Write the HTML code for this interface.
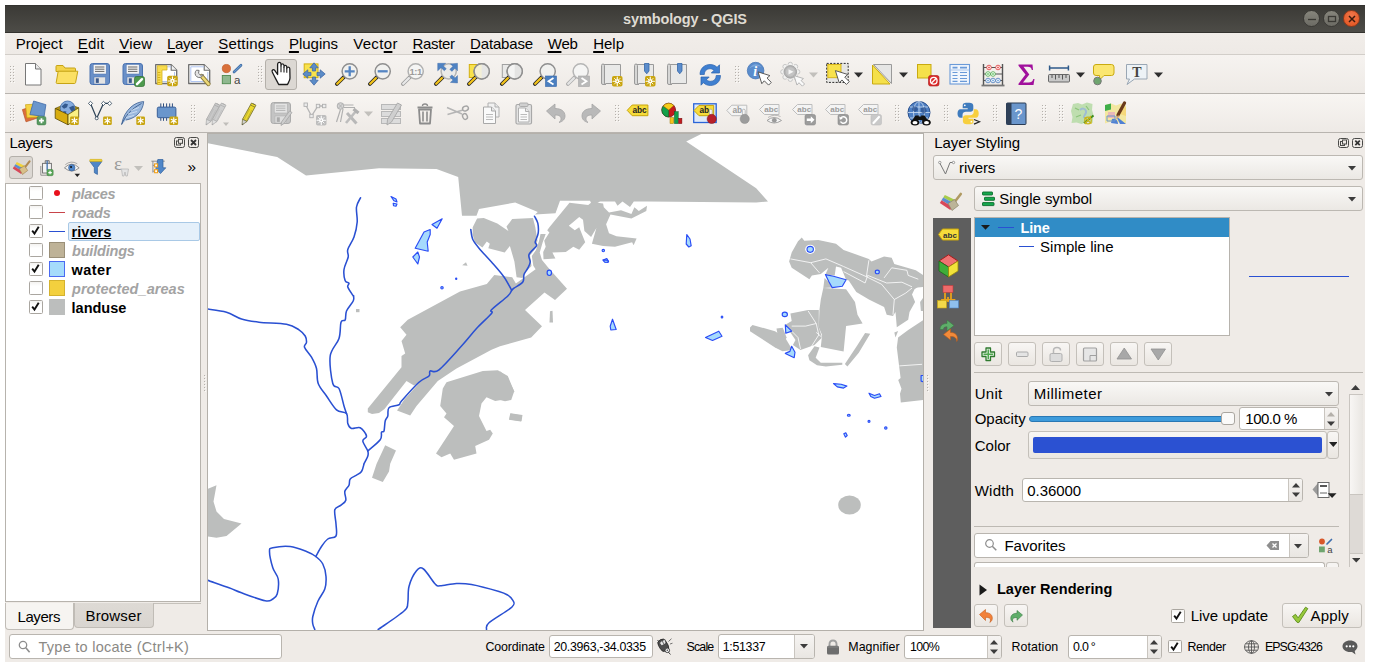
<!DOCTYPE html>
<html><head><meta charset="utf-8"><title>symbology - QGIS</title>
<style>
html,body{margin:0;padding:0;background:#fff;}
body{width:1374px;height:671px;overflow:hidden;position:relative;font-family:"Liberation Sans",sans-serif;color:#000;}
div,span,svg{position:absolute;box-sizing:border-box;}
.t{white-space:nowrap;line-height:20px;height:20px;}
u{text-decoration:underline;text-underline-offset:1.5px;text-decoration-thickness:1.5px;text-decoration-skip-ink:none;}
.btn{border:1px solid #c4c0ba;border-radius:3px;background:linear-gradient(#f8f6f4,#eae6e1);}
.inp{border:1px solid #b9b5af;border-radius:3px;background:#fff;}
.cmb{border:1px solid #bcb8b2;border-radius:3px;background:linear-gradient(#f9f8f6,#ebe8e4);}
.hd{width:5px;height:21px;background-image:radial-gradient(circle,#c6c2bd 0.7px,transparent 0.9px);background-size:3px 3px;}
.cb{border:1px solid #aaa6a0;border-radius:1.5px;background:linear-gradient(#f4f3f1,#fff 35%);}
</style></head>
<body>
<div style="left:5px;top:5px;width:1360px;height:657px;background:#efebe7;"></div>
<div style="left:5px;top:5px;width:1360px;height:28px;background:linear-gradient(#3b3a36,#4d4c47);border-top:1px solid #33322f;border-bottom:1px solid #34332f;"></div>
<span class="t" style="left:623px;top:9px;font-size:14.5px;letter-spacing:-0.11px;color:#dfdbd2;font-weight:bold;">symbology - QGIS</span>
<div style="left:1303px;top:10px;width:17px;height:17px;border-radius:50%;background:linear-gradient(#86857c,#6c6b64);border:1px solid #3a3935;"></div>
<div style="left:1323px;top:10px;width:17px;height:17px;border-radius:50%;background:linear-gradient(#86857c,#6c6b64);border:1px solid #3a3935;"></div>
<div style="left:1343px;top:10px;width:17px;height:17px;border-radius:50%;background:radial-gradient(circle at 50% 30%,#f0764a,#e2521d);border:1px solid #8f3a1c;"></div>
<svg style="left:1302.5px;top:9.5px" width="60" height="18" viewBox="1303 10 60 18"><g stroke="#3a3934" stroke-width="1.3" fill="none"><path d="M1308 19.5h8"/><rect x="1328.5" y="16.5" width="7" height="5"/><path d="M1349 16l6 6M1355 16l-6 6" stroke="#3b1a0c" stroke-width="1.5"/></g></svg>
<div style="left:5px;top:33px;width:1360px;height:21px;background:linear-gradient(#f1ede9,#eeeae6);"></div>
<span class="t" style="left:15.7px;top:34px;font-size:15px;letter-spacing:0.03px;">Pro<u>j</u>ect</span>
<span class="t" style="left:77.7px;top:34px;font-size:15px;letter-spacing:0.24px;"><u>E</u>dit</span>
<span class="t" style="left:119.2px;top:34px;font-size:15px;letter-spacing:0.21px;"><u>V</u>iew</span>
<span class="t" style="left:167px;top:34px;font-size:15px;letter-spacing:-0.33px;"><u>L</u>ayer</span>
<span class="t" style="left:218.3px;top:34px;font-size:15px;letter-spacing:0.17px;"><u>S</u>ettings</span>
<span class="t" style="left:288.9px;top:34px;font-size:15px;letter-spacing:-0.00px;"><u>P</u>lugins</span>
<span class="t" style="left:353.2px;top:34px;font-size:15px;letter-spacing:0.33px;">Vect<u>o</u>r</span>
<span class="t" style="left:412.5px;top:34px;font-size:15px;letter-spacing:-0.35px;"><u>R</u>aster</span>
<span class="t" style="left:470px;top:34px;font-size:15px;letter-spacing:-0.15px;"><u>D</u>atabase</span>
<span class="t" style="left:547.7px;top:34px;font-size:15px;letter-spacing:-0.16px;"><u>W</u>eb</span>
<span class="t" style="left:593.2px;top:34px;font-size:15px;letter-spacing:-0.02px;"><u>H</u>elp</span>
<div style="left:5px;top:54px;width:1360px;height:40px;background:linear-gradient(#f6f3f0,#eeeae6);border-top:1px solid #d2cec9;border-bottom:1px solid #b8b4af;"></div>
<div style="left:5px;top:94px;width:1360px;height:39px;background:linear-gradient(#f8f5f2,#eeeae6);border-bottom:1px solid #b8b4af;"></div>
<svg style="left:10px;top:66px" width="5" height="17" viewBox="0 0 5 17" shape-rendering="crispEdges"><rect x="0" y="0" width="1" height="1" fill="#b4b0ab"/><rect x="1" y="1" width="1" height="1" fill="#fbfaf8"/><rect x="0" y="3" width="1" height="1" fill="#b4b0ab"/><rect x="1" y="4" width="1" height="1" fill="#fbfaf8"/><rect x="0" y="6" width="1" height="1" fill="#b4b0ab"/><rect x="1" y="7" width="1" height="1" fill="#fbfaf8"/><rect x="0" y="9" width="1" height="1" fill="#b4b0ab"/><rect x="1" y="10" width="1" height="1" fill="#fbfaf8"/><rect x="0" y="12" width="1" height="1" fill="#b4b0ab"/><rect x="1" y="13" width="1" height="1" fill="#fbfaf8"/><rect x="0" y="15" width="1" height="1" fill="#b4b0ab"/><rect x="1" y="16" width="1" height="1" fill="#fbfaf8"/><rect x="3" y="0" width="1" height="1" fill="#b4b0ab"/><rect x="4" y="1" width="1" height="1" fill="#fbfaf8"/><rect x="3" y="3" width="1" height="1" fill="#b4b0ab"/><rect x="4" y="4" width="1" height="1" fill="#fbfaf8"/><rect x="3" y="6" width="1" height="1" fill="#b4b0ab"/><rect x="4" y="7" width="1" height="1" fill="#fbfaf8"/><rect x="3" y="9" width="1" height="1" fill="#b4b0ab"/><rect x="4" y="10" width="1" height="1" fill="#fbfaf8"/><rect x="3" y="12" width="1" height="1" fill="#b4b0ab"/><rect x="4" y="13" width="1" height="1" fill="#fbfaf8"/><rect x="3" y="15" width="1" height="1" fill="#b4b0ab"/><rect x="4" y="16" width="1" height="1" fill="#fbfaf8"/></svg>
<svg style="left:258px;top:66px" width="5" height="17" viewBox="0 0 5 17" shape-rendering="crispEdges"><rect x="0" y="0" width="1" height="1" fill="#b4b0ab"/><rect x="1" y="1" width="1" height="1" fill="#fbfaf8"/><rect x="0" y="3" width="1" height="1" fill="#b4b0ab"/><rect x="1" y="4" width="1" height="1" fill="#fbfaf8"/><rect x="0" y="6" width="1" height="1" fill="#b4b0ab"/><rect x="1" y="7" width="1" height="1" fill="#fbfaf8"/><rect x="0" y="9" width="1" height="1" fill="#b4b0ab"/><rect x="1" y="10" width="1" height="1" fill="#fbfaf8"/><rect x="0" y="12" width="1" height="1" fill="#b4b0ab"/><rect x="1" y="13" width="1" height="1" fill="#fbfaf8"/><rect x="0" y="15" width="1" height="1" fill="#b4b0ab"/><rect x="1" y="16" width="1" height="1" fill="#fbfaf8"/><rect x="3" y="0" width="1" height="1" fill="#b4b0ab"/><rect x="4" y="1" width="1" height="1" fill="#fbfaf8"/><rect x="3" y="3" width="1" height="1" fill="#b4b0ab"/><rect x="4" y="4" width="1" height="1" fill="#fbfaf8"/><rect x="3" y="6" width="1" height="1" fill="#b4b0ab"/><rect x="4" y="7" width="1" height="1" fill="#fbfaf8"/><rect x="3" y="9" width="1" height="1" fill="#b4b0ab"/><rect x="4" y="10" width="1" height="1" fill="#fbfaf8"/><rect x="3" y="12" width="1" height="1" fill="#b4b0ab"/><rect x="4" y="13" width="1" height="1" fill="#fbfaf8"/><rect x="3" y="15" width="1" height="1" fill="#b4b0ab"/><rect x="4" y="16" width="1" height="1" fill="#fbfaf8"/></svg>
<svg style="left:735px;top:66px" width="5" height="17" viewBox="0 0 5 17" shape-rendering="crispEdges"><rect x="0" y="0" width="1" height="1" fill="#b4b0ab"/><rect x="1" y="1" width="1" height="1" fill="#fbfaf8"/><rect x="0" y="3" width="1" height="1" fill="#b4b0ab"/><rect x="1" y="4" width="1" height="1" fill="#fbfaf8"/><rect x="0" y="6" width="1" height="1" fill="#b4b0ab"/><rect x="1" y="7" width="1" height="1" fill="#fbfaf8"/><rect x="0" y="9" width="1" height="1" fill="#b4b0ab"/><rect x="1" y="10" width="1" height="1" fill="#fbfaf8"/><rect x="0" y="12" width="1" height="1" fill="#b4b0ab"/><rect x="1" y="13" width="1" height="1" fill="#fbfaf8"/><rect x="0" y="15" width="1" height="1" fill="#b4b0ab"/><rect x="1" y="16" width="1" height="1" fill="#fbfaf8"/><rect x="3" y="0" width="1" height="1" fill="#b4b0ab"/><rect x="4" y="1" width="1" height="1" fill="#fbfaf8"/><rect x="3" y="3" width="1" height="1" fill="#b4b0ab"/><rect x="4" y="4" width="1" height="1" fill="#fbfaf8"/><rect x="3" y="6" width="1" height="1" fill="#b4b0ab"/><rect x="4" y="7" width="1" height="1" fill="#fbfaf8"/><rect x="3" y="9" width="1" height="1" fill="#b4b0ab"/><rect x="4" y="10" width="1" height="1" fill="#fbfaf8"/><rect x="3" y="12" width="1" height="1" fill="#b4b0ab"/><rect x="4" y="13" width="1" height="1" fill="#fbfaf8"/><rect x="3" y="15" width="1" height="1" fill="#b4b0ab"/><rect x="4" y="16" width="1" height="1" fill="#fbfaf8"/></svg>
<svg style="left:10px;top:105px" width="5" height="17" viewBox="0 0 5 17" shape-rendering="crispEdges"><rect x="0" y="0" width="1" height="1" fill="#b4b0ab"/><rect x="1" y="1" width="1" height="1" fill="#fbfaf8"/><rect x="0" y="3" width="1" height="1" fill="#b4b0ab"/><rect x="1" y="4" width="1" height="1" fill="#fbfaf8"/><rect x="0" y="6" width="1" height="1" fill="#b4b0ab"/><rect x="1" y="7" width="1" height="1" fill="#fbfaf8"/><rect x="0" y="9" width="1" height="1" fill="#b4b0ab"/><rect x="1" y="10" width="1" height="1" fill="#fbfaf8"/><rect x="0" y="12" width="1" height="1" fill="#b4b0ab"/><rect x="1" y="13" width="1" height="1" fill="#fbfaf8"/><rect x="0" y="15" width="1" height="1" fill="#b4b0ab"/><rect x="1" y="16" width="1" height="1" fill="#fbfaf8"/><rect x="3" y="0" width="1" height="1" fill="#b4b0ab"/><rect x="4" y="1" width="1" height="1" fill="#fbfaf8"/><rect x="3" y="3" width="1" height="1" fill="#b4b0ab"/><rect x="4" y="4" width="1" height="1" fill="#fbfaf8"/><rect x="3" y="6" width="1" height="1" fill="#b4b0ab"/><rect x="4" y="7" width="1" height="1" fill="#fbfaf8"/><rect x="3" y="9" width="1" height="1" fill="#b4b0ab"/><rect x="4" y="10" width="1" height="1" fill="#fbfaf8"/><rect x="3" y="12" width="1" height="1" fill="#b4b0ab"/><rect x="4" y="13" width="1" height="1" fill="#fbfaf8"/><rect x="3" y="15" width="1" height="1" fill="#b4b0ab"/><rect x="4" y="16" width="1" height="1" fill="#fbfaf8"/></svg>
<svg style="left:191px;top:105px" width="5" height="17" viewBox="0 0 5 17" shape-rendering="crispEdges"><rect x="0" y="0" width="1" height="1" fill="#b4b0ab"/><rect x="1" y="1" width="1" height="1" fill="#fbfaf8"/><rect x="0" y="3" width="1" height="1" fill="#b4b0ab"/><rect x="1" y="4" width="1" height="1" fill="#fbfaf8"/><rect x="0" y="6" width="1" height="1" fill="#b4b0ab"/><rect x="1" y="7" width="1" height="1" fill="#fbfaf8"/><rect x="0" y="9" width="1" height="1" fill="#b4b0ab"/><rect x="1" y="10" width="1" height="1" fill="#fbfaf8"/><rect x="0" y="12" width="1" height="1" fill="#b4b0ab"/><rect x="1" y="13" width="1" height="1" fill="#fbfaf8"/><rect x="0" y="15" width="1" height="1" fill="#b4b0ab"/><rect x="1" y="16" width="1" height="1" fill="#fbfaf8"/><rect x="3" y="0" width="1" height="1" fill="#b4b0ab"/><rect x="4" y="1" width="1" height="1" fill="#fbfaf8"/><rect x="3" y="3" width="1" height="1" fill="#b4b0ab"/><rect x="4" y="4" width="1" height="1" fill="#fbfaf8"/><rect x="3" y="6" width="1" height="1" fill="#b4b0ab"/><rect x="4" y="7" width="1" height="1" fill="#fbfaf8"/><rect x="3" y="9" width="1" height="1" fill="#b4b0ab"/><rect x="4" y="10" width="1" height="1" fill="#fbfaf8"/><rect x="3" y="12" width="1" height="1" fill="#b4b0ab"/><rect x="4" y="13" width="1" height="1" fill="#fbfaf8"/><rect x="3" y="15" width="1" height="1" fill="#b4b0ab"/><rect x="4" y="16" width="1" height="1" fill="#fbfaf8"/></svg>
<svg style="left:615px;top:105px" width="5" height="17" viewBox="0 0 5 17" shape-rendering="crispEdges"><rect x="0" y="0" width="1" height="1" fill="#b4b0ab"/><rect x="1" y="1" width="1" height="1" fill="#fbfaf8"/><rect x="0" y="3" width="1" height="1" fill="#b4b0ab"/><rect x="1" y="4" width="1" height="1" fill="#fbfaf8"/><rect x="0" y="6" width="1" height="1" fill="#b4b0ab"/><rect x="1" y="7" width="1" height="1" fill="#fbfaf8"/><rect x="0" y="9" width="1" height="1" fill="#b4b0ab"/><rect x="1" y="10" width="1" height="1" fill="#fbfaf8"/><rect x="0" y="12" width="1" height="1" fill="#b4b0ab"/><rect x="1" y="13" width="1" height="1" fill="#fbfaf8"/><rect x="0" y="15" width="1" height="1" fill="#b4b0ab"/><rect x="1" y="16" width="1" height="1" fill="#fbfaf8"/><rect x="3" y="0" width="1" height="1" fill="#b4b0ab"/><rect x="4" y="1" width="1" height="1" fill="#fbfaf8"/><rect x="3" y="3" width="1" height="1" fill="#b4b0ab"/><rect x="4" y="4" width="1" height="1" fill="#fbfaf8"/><rect x="3" y="6" width="1" height="1" fill="#b4b0ab"/><rect x="4" y="7" width="1" height="1" fill="#fbfaf8"/><rect x="3" y="9" width="1" height="1" fill="#b4b0ab"/><rect x="4" y="10" width="1" height="1" fill="#fbfaf8"/><rect x="3" y="12" width="1" height="1" fill="#b4b0ab"/><rect x="4" y="13" width="1" height="1" fill="#fbfaf8"/><rect x="3" y="15" width="1" height="1" fill="#b4b0ab"/><rect x="4" y="16" width="1" height="1" fill="#fbfaf8"/></svg>
<svg style="left:895px;top:105px" width="5" height="17" viewBox="0 0 5 17" shape-rendering="crispEdges"><rect x="0" y="0" width="1" height="1" fill="#b4b0ab"/><rect x="1" y="1" width="1" height="1" fill="#fbfaf8"/><rect x="0" y="3" width="1" height="1" fill="#b4b0ab"/><rect x="1" y="4" width="1" height="1" fill="#fbfaf8"/><rect x="0" y="6" width="1" height="1" fill="#b4b0ab"/><rect x="1" y="7" width="1" height="1" fill="#fbfaf8"/><rect x="0" y="9" width="1" height="1" fill="#b4b0ab"/><rect x="1" y="10" width="1" height="1" fill="#fbfaf8"/><rect x="0" y="12" width="1" height="1" fill="#b4b0ab"/><rect x="1" y="13" width="1" height="1" fill="#fbfaf8"/><rect x="0" y="15" width="1" height="1" fill="#b4b0ab"/><rect x="1" y="16" width="1" height="1" fill="#fbfaf8"/><rect x="3" y="0" width="1" height="1" fill="#b4b0ab"/><rect x="4" y="1" width="1" height="1" fill="#fbfaf8"/><rect x="3" y="3" width="1" height="1" fill="#b4b0ab"/><rect x="4" y="4" width="1" height="1" fill="#fbfaf8"/><rect x="3" y="6" width="1" height="1" fill="#b4b0ab"/><rect x="4" y="7" width="1" height="1" fill="#fbfaf8"/><rect x="3" y="9" width="1" height="1" fill="#b4b0ab"/><rect x="4" y="10" width="1" height="1" fill="#fbfaf8"/><rect x="3" y="12" width="1" height="1" fill="#b4b0ab"/><rect x="4" y="13" width="1" height="1" fill="#fbfaf8"/><rect x="3" y="15" width="1" height="1" fill="#b4b0ab"/><rect x="4" y="16" width="1" height="1" fill="#fbfaf8"/></svg>
<svg style="left:944px;top:105px" width="5" height="17" viewBox="0 0 5 17" shape-rendering="crispEdges"><rect x="0" y="0" width="1" height="1" fill="#b4b0ab"/><rect x="1" y="1" width="1" height="1" fill="#fbfaf8"/><rect x="0" y="3" width="1" height="1" fill="#b4b0ab"/><rect x="1" y="4" width="1" height="1" fill="#fbfaf8"/><rect x="0" y="6" width="1" height="1" fill="#b4b0ab"/><rect x="1" y="7" width="1" height="1" fill="#fbfaf8"/><rect x="0" y="9" width="1" height="1" fill="#b4b0ab"/><rect x="1" y="10" width="1" height="1" fill="#fbfaf8"/><rect x="0" y="12" width="1" height="1" fill="#b4b0ab"/><rect x="1" y="13" width="1" height="1" fill="#fbfaf8"/><rect x="0" y="15" width="1" height="1" fill="#b4b0ab"/><rect x="1" y="16" width="1" height="1" fill="#fbfaf8"/><rect x="3" y="0" width="1" height="1" fill="#b4b0ab"/><rect x="4" y="1" width="1" height="1" fill="#fbfaf8"/><rect x="3" y="3" width="1" height="1" fill="#b4b0ab"/><rect x="4" y="4" width="1" height="1" fill="#fbfaf8"/><rect x="3" y="6" width="1" height="1" fill="#b4b0ab"/><rect x="4" y="7" width="1" height="1" fill="#fbfaf8"/><rect x="3" y="9" width="1" height="1" fill="#b4b0ab"/><rect x="4" y="10" width="1" height="1" fill="#fbfaf8"/><rect x="3" y="12" width="1" height="1" fill="#b4b0ab"/><rect x="4" y="13" width="1" height="1" fill="#fbfaf8"/><rect x="3" y="15" width="1" height="1" fill="#b4b0ab"/><rect x="4" y="16" width="1" height="1" fill="#fbfaf8"/></svg>
<svg style="left:993px;top:105px" width="5" height="17" viewBox="0 0 5 17" shape-rendering="crispEdges"><rect x="0" y="0" width="1" height="1" fill="#b4b0ab"/><rect x="1" y="1" width="1" height="1" fill="#fbfaf8"/><rect x="0" y="3" width="1" height="1" fill="#b4b0ab"/><rect x="1" y="4" width="1" height="1" fill="#fbfaf8"/><rect x="0" y="6" width="1" height="1" fill="#b4b0ab"/><rect x="1" y="7" width="1" height="1" fill="#fbfaf8"/><rect x="0" y="9" width="1" height="1" fill="#b4b0ab"/><rect x="1" y="10" width="1" height="1" fill="#fbfaf8"/><rect x="0" y="12" width="1" height="1" fill="#b4b0ab"/><rect x="1" y="13" width="1" height="1" fill="#fbfaf8"/><rect x="0" y="15" width="1" height="1" fill="#b4b0ab"/><rect x="1" y="16" width="1" height="1" fill="#fbfaf8"/><rect x="3" y="0" width="1" height="1" fill="#b4b0ab"/><rect x="4" y="1" width="1" height="1" fill="#fbfaf8"/><rect x="3" y="3" width="1" height="1" fill="#b4b0ab"/><rect x="4" y="4" width="1" height="1" fill="#fbfaf8"/><rect x="3" y="6" width="1" height="1" fill="#b4b0ab"/><rect x="4" y="7" width="1" height="1" fill="#fbfaf8"/><rect x="3" y="9" width="1" height="1" fill="#b4b0ab"/><rect x="4" y="10" width="1" height="1" fill="#fbfaf8"/><rect x="3" y="12" width="1" height="1" fill="#b4b0ab"/><rect x="4" y="13" width="1" height="1" fill="#fbfaf8"/><rect x="3" y="15" width="1" height="1" fill="#b4b0ab"/><rect x="4" y="16" width="1" height="1" fill="#fbfaf8"/></svg>
<svg style="left:1042px;top:105px" width="5" height="17" viewBox="0 0 5 17" shape-rendering="crispEdges"><rect x="0" y="0" width="1" height="1" fill="#b4b0ab"/><rect x="1" y="1" width="1" height="1" fill="#fbfaf8"/><rect x="0" y="3" width="1" height="1" fill="#b4b0ab"/><rect x="1" y="4" width="1" height="1" fill="#fbfaf8"/><rect x="0" y="6" width="1" height="1" fill="#b4b0ab"/><rect x="1" y="7" width="1" height="1" fill="#fbfaf8"/><rect x="0" y="9" width="1" height="1" fill="#b4b0ab"/><rect x="1" y="10" width="1" height="1" fill="#fbfaf8"/><rect x="0" y="12" width="1" height="1" fill="#b4b0ab"/><rect x="1" y="13" width="1" height="1" fill="#fbfaf8"/><rect x="0" y="15" width="1" height="1" fill="#b4b0ab"/><rect x="1" y="16" width="1" height="1" fill="#fbfaf8"/><rect x="3" y="0" width="1" height="1" fill="#b4b0ab"/><rect x="4" y="1" width="1" height="1" fill="#fbfaf8"/><rect x="3" y="3" width="1" height="1" fill="#b4b0ab"/><rect x="4" y="4" width="1" height="1" fill="#fbfaf8"/><rect x="3" y="6" width="1" height="1" fill="#b4b0ab"/><rect x="4" y="7" width="1" height="1" fill="#fbfaf8"/><rect x="3" y="9" width="1" height="1" fill="#b4b0ab"/><rect x="4" y="10" width="1" height="1" fill="#fbfaf8"/><rect x="3" y="12" width="1" height="1" fill="#b4b0ab"/><rect x="4" y="13" width="1" height="1" fill="#fbfaf8"/><rect x="3" y="15" width="1" height="1" fill="#b4b0ab"/><rect x="4" y="16" width="1" height="1" fill="#fbfaf8"/></svg>
<svg style="left:1059px;top:105px" width="5" height="17" viewBox="0 0 5 17" shape-rendering="crispEdges"><rect x="0" y="0" width="1" height="1" fill="#b4b0ab"/><rect x="1" y="1" width="1" height="1" fill="#fbfaf8"/><rect x="0" y="3" width="1" height="1" fill="#b4b0ab"/><rect x="1" y="4" width="1" height="1" fill="#fbfaf8"/><rect x="0" y="6" width="1" height="1" fill="#b4b0ab"/><rect x="1" y="7" width="1" height="1" fill="#fbfaf8"/><rect x="0" y="9" width="1" height="1" fill="#b4b0ab"/><rect x="1" y="10" width="1" height="1" fill="#fbfaf8"/><rect x="0" y="12" width="1" height="1" fill="#b4b0ab"/><rect x="1" y="13" width="1" height="1" fill="#fbfaf8"/><rect x="0" y="15" width="1" height="1" fill="#b4b0ab"/><rect x="1" y="16" width="1" height="1" fill="#fbfaf8"/><rect x="3" y="0" width="1" height="1" fill="#b4b0ab"/><rect x="4" y="1" width="1" height="1" fill="#fbfaf8"/><rect x="3" y="3" width="1" height="1" fill="#b4b0ab"/><rect x="4" y="4" width="1" height="1" fill="#fbfaf8"/><rect x="3" y="6" width="1" height="1" fill="#b4b0ab"/><rect x="4" y="7" width="1" height="1" fill="#fbfaf8"/><rect x="3" y="9" width="1" height="1" fill="#b4b0ab"/><rect x="4" y="10" width="1" height="1" fill="#fbfaf8"/><rect x="3" y="12" width="1" height="1" fill="#b4b0ab"/><rect x="4" y="13" width="1" height="1" fill="#fbfaf8"/><rect x="3" y="15" width="1" height="1" fill="#b4b0ab"/><rect x="4" y="16" width="1" height="1" fill="#fbfaf8"/></svg>
<div style="left:265px;top:59px;width:32px;height:31px;background:#dcd8d3;border:1px solid #b4b0aa;border-radius:3px;"></div>
<svg style="left:0;top:55px" width="1374" height="80" viewBox="0 55 1374 80" font-family="Liberation Sans">
<g transform="translate(22,63)"><path d="M3.5 0.5h10.0l5.5 5.5v16.0h-15.5z" fill="#fff" stroke="#777" stroke-width="1" stroke-linejoin="round"/><path d="M13.5 0.5v5.5h5.5" fill="#e8e8e8" stroke="#777" stroke-width="1" stroke-linejoin="round"/></g>
<g transform="translate(55,63)"><path d="M1 3.5q0-1 1-1h6l2 2.5h9.5q1 0 1 1v2.5H1z" fill="#f3d34a" stroke="#c6a416" stroke-width="1" stroke-linejoin="round"/><path d="M1.2 19.5L3.2 8.2h19.6l-2.2 11.3q-.2 1-1.2 1H2.2q-1 0-1-1z" fill="#fbe064" stroke="#c6a416" stroke-width="1" stroke-linejoin="round"/></g>
<g transform="translate(88,63)"><rect x="2" y="0.5" width="19.5" height="21" rx="2.5" fill="#6a90c8" stroke="#4a72b0" stroke-width="1"/><rect x="5.2" y="1.5" width="13" height="9.5" fill="#f4f4f4" stroke="#4a72b0" stroke-width=".5"/><path d="M7 4h9.4M7 6.2h9.4M7 8.4h9.4" stroke="#666" stroke-width="1"/><rect x="6" y="14" width="11.5" height="7" fill="#e4e4e4" stroke="#4a72b0" stroke-width=".5"/><rect x="7.8" y="15.3" width="3" height="4.6" fill="#3c5a8c"/></g>
<g transform="translate(121,63)"><rect x="2" y="0.5" width="19.5" height="21" rx="2.5" fill="#6a90c8" stroke="#4a72b0" stroke-width="1"/><rect x="5.2" y="1.5" width="13" height="9.5" fill="#f4f4f4" stroke="#4a72b0" stroke-width=".5"/><path d="M7 4h9.4M7 6.2h9.4M7 8.4h9.4" stroke="#666" stroke-width="1"/><rect x="6" y="14" width="11.5" height="7" fill="#e4e4e4" stroke="#4a72b0" stroke-width=".5"/><rect x="7.8" y="15.3" width="3" height="4.6" fill="#3c5a8c"/><rect x="13.5" y="13.5" width="10" height="10" rx="2" fill="#4d9a4d" stroke="#2f6f2f" stroke-width=".7"/><path d="M16 21.2l5-5" stroke="#fff" stroke-width="2.4" stroke-linecap="round"/></g>
<g transform="translate(154,63)"><path d="M1.700 1.700h15.500l5.500 5.500v13.300H1.700z" fill="#fff" stroke="#6e6e6e" stroke-width="1.300" stroke-linejoin="round"/><path d="M17.200 1.700v5.500h5.500" fill="#f2f2f2" stroke="#6e6e6e" stroke-width="1.100" stroke-linejoin="round"/><path d="M8 3.800h9M20.500 9v9.500H8" fill="none" stroke="#a8c0f0" stroke-width=".900"/><path d="M3.300 2.700h9.700v4.300h-5v14.500h-4.700z" fill="#f8dc4e" stroke="#d4b21e" stroke-width=".800" stroke-linejoin="round"/><path d="M3.800 9.500h2.600M3.800 12h2.600M3.800 14.500h2.600M3.800 17h2.600M3.800 19.500h2.600" stroke="#c9a510" stroke-width=".800"/><rect x="13.2" y="12.7" width="10.500" height="10.500" rx="1.800" fill="#c9a510"/><g stroke="#fff" stroke-width="1.100" stroke-linecap="round"><path d="M18.45 13.75v8.400M14.25 17.95h8.400"/><path stroke-width=".900" d="M15.649999999999999 15.149999999999999l5.600 5.600M21.25 15.149999999999999l-5.600 5.600"/></g><circle cx="18.45" cy="17.95" r="2.100" fill="#fff"/><circle cx="18.45" cy="17.95" r=".800" fill="#c9a510"/></g>
<g transform="translate(187,63)"><path d="M1.700 1.700h15.500l5.500 5.500v13.300H1.700z" fill="#fff" stroke="#6e6e6e" stroke-width="1.300" stroke-linejoin="round"/><path d="M17.200 1.700v5.500h5.500" fill="#f2f2f2" stroke="#6e6e6e" stroke-width="1.100" stroke-linejoin="round"/><path d="M17 3.800H3.800v14.700h17V9" fill="none" stroke="#a8c0f0" stroke-width=".900"/><path d="M14.500 13l7 8" stroke="#8a7a3a" stroke-width="4.200" stroke-linecap="round"/><path d="M14.500 13l7 8" stroke="#ecd878" stroke-width="2.600" stroke-linecap="round"/><path d="M9.500 7.200a4.200 4.200 0 1 0 6.800 4.400l-2.600 .700-2.200-2 .600-2.900z" fill="#e4e4e4" stroke="#777" stroke-width="1" stroke-linejoin="round"/></g>
<g transform="translate(220,63)"><circle cx="6.400" cy="5.550" r="4.100" fill="#d9703a" stroke="#c25a26" stroke-width=".700"/><rect x="2.300" y="12.500" width="8.200" height="8.200" fill="#8fb88f" stroke="#4f8a4f" stroke-width=".900"/><path d="M14 9l7-6.800" stroke="#3a68a0" stroke-width="2.600" stroke-linecap="round"/><path d="M14 9l7-6.800" stroke="#6a9ad0" stroke-width="1.200" stroke-linecap="round" stroke-dasharray=".6 .6"/><text x="17.300" y="20.600" font-size="11.500" text-anchor="middle" fill="#444">a</text></g>
<g transform="translate(269,63)"><path d="M9.700 21.500C8 18 5 13 3.200 8.800C2.600 7 4.600 6 5.700 7.300L8.600 11.500V1.400C8.600-1.400 12-1.400 12 1.400V2.800C12 .200 15 .200 15 2.800V4C15 1.800 17.800 1.800 17.800 4.200V5.600C17.800 3.400 20.800 3.600 20.800 5.800L21 15C21 17.500 19.500 19.500 18.500 21.500z" fill="#fff" stroke="#1e1e1e" stroke-width="1.300" stroke-linejoin="round"/><path d="M12 2.800v6.400M15 4v5.400M17.800 5.600v4.200" stroke="#1e1e1e" stroke-width="1.100"/></g>
<g transform="translate(302,62)"><rect x="2.200" y="1.900" width="13.800" height="13.800" fill="#f8e24c" stroke="#d4b010" stroke-width="1"/><g fill="#5b8cc8" stroke="#3a62a0" stroke-width=".700" stroke-linejoin="round"><path d="M12 .800l4.200 5h-2.600v3.200h-3.200V5.800h-2.600z"/><path d="M12 23.200l4.200-5h-2.600v-3.200h-3.200v3.200h-2.600z"/><path d="M.800 12l5-4.200v2.600h3.200v3.200h-3.200v2.600z"/><path d="M23.200 12l-5-4.200v2.600h-3.200v3.200h3.200v2.600z"/></g></g>
<g transform="translate(335,63)"><path d="M9.600 13.400L1.900 21" stroke="#222" stroke-width="3.800" stroke-linecap="round"/><path d="M7.900 15.100L2.200 20.700" stroke="#f2c21a" stroke-width="2.300" stroke-linecap="round"/><circle cx="14.700" cy="8.300" r="7.600" fill="#f1f1ef" stroke="#8f8f8f" stroke-width="1.500"/><path d="M9.700 8.300h10M14.700 3.300v10" stroke="#5585c2" stroke-width="2.300"/></g>
<g transform="translate(368,63)"><path d="M9.600 13.400L1.900 21" stroke="#222" stroke-width="3.800" stroke-linecap="round"/><path d="M7.900 15.100L2.200 20.700" stroke="#f2c21a" stroke-width="2.300" stroke-linecap="round"/><circle cx="14.700" cy="8.300" r="7.600" fill="#f1f1ef" stroke="#8f8f8f" stroke-width="1.500"/><path d="M9.700 8.300h10" stroke="#5585c2" stroke-width="2.300"/></g>
<g transform="translate(401,63)"><path d="M9.600 13.400L1.900 21" stroke="#9a9a9a" stroke-width="3.800" stroke-linecap="round"/><path d="M7.900 15.100L2.200 20.700" stroke="#e8e8e8" stroke-width="2.300" stroke-linecap="round"/><circle cx="14.700" cy="8.300" r="7.600" fill="#f5f5f4" stroke="#b0b0b0" stroke-width="1.500"/><text x="14.700" y="11.700" font-size="9.500" font-weight="bold" text-anchor="middle" fill="#9c9c9c" letter-spacing="-.5">1:1</text></g>
<g transform="translate(434,63)"><path d="M9.600 13.400L1.900 21" stroke="#222" stroke-width="3.800" stroke-linecap="round"/><path d="M7.900 15.100L2.200 20.700" stroke="#f2c21a" stroke-width="2.300" stroke-linecap="round"/><circle cx="14.700" cy="8.300" r="7.600" fill="#ebebea" stroke="#b4b4b4" stroke-width="1.500"/><g fill="#4f83c3" stroke="#3a66a4" stroke-width=".400"><path d="M3.700 .300h8l-2.600 2.400 3.200 3-2 2.100-3.200-3.100L3.700 7.800z"/><path d="M23.500 .300v7.500l-2.500-2.500-3.200 3.100-2-2.100 3.200-3-2.600-2.400z"/><path d="M23.500 20v-7.500l-2.500 2.500-3.200-3.100-2 2.100 3.200 3-2.600 2.400z"/></g></g>
<g transform="translate(467,63)"><rect x="2.300" y="1.500" width="11" height="13" fill="#f8e24c" stroke="#d4b010" stroke-width="1"/><path d="M9.600 13.400L1.900 21" stroke="#222" stroke-width="3.800" stroke-linecap="round"/><path d="M7.900 15.100L2.200 20.700" stroke="#f2c21a" stroke-width="2.300" stroke-linecap="round"/><circle cx="14.700" cy="8.300" r="7.600" fill="#f1f1ef" stroke="#8f8f8f" stroke-width="1.500"/><circle cx="14.700" cy="8.300" r="7.600" fill="#f3efd6"/><path d="M14.700 .700A7.600 7.600 0 0 1 14.700 15.900z" fill="#e6e6e5"/><circle cx="14.700" cy="8.300" r="7.600" fill="none" stroke="#8f8f8f" stroke-width="1.500"/></g>
<g transform="translate(500,63)"><rect x="2.300" y="1.500" width="11" height="13" fill="#e9e9e8" stroke="#a0a0a0" stroke-width="1"/><path d="M9.600 13.400L1.900 21" stroke="#222" stroke-width="3.800" stroke-linecap="round"/><path d="M7.900 15.100L2.200 20.700" stroke="#f2c21a" stroke-width="2.300" stroke-linecap="round"/><circle cx="14.700" cy="8.300" r="7.600" fill="#f1f1ef" stroke="#8f8f8f" stroke-width="1.500"/><circle cx="14.700" cy="8.300" r="7.600" fill="#f4f4f3"/><path d="M14.700 .700A7.600 7.600 0 0 1 14.700 15.900z" fill="#e4e4e3"/><circle cx="14.700" cy="8.300" r="7.600" fill="none" stroke="#8f8f8f" stroke-width="1.500"/></g>
<g transform="translate(533,63)"><path d="M9.600 13.400L1.900 21" stroke="#222" stroke-width="3.800" stroke-linecap="round"/><path d="M7.900 15.100L2.200 20.700" stroke="#f2c21a" stroke-width="2.300" stroke-linecap="round"/><circle cx="14.700" cy="8.300" r="7.600" fill="#f1f1ef" stroke="#8f8f8f" stroke-width="1.500"/><rect x="12.500" y="13" width="11" height="10.500" fill="#4a7fc0" stroke="#3467a8" stroke-width=".600"/><path d="M20.500 15l-5 3.300 5 3.300" fill="none" stroke="#fff" stroke-width="1.800"/></g>
<g transform="translate(566,63)"><path d="M9.600 13.400L1.900 21" stroke="#aaa" stroke-width="3.800" stroke-linecap="round"/><path d="M7.900 15.100L2.200 20.700" stroke="#e4e4e4" stroke-width="2.300" stroke-linecap="round"/><circle cx="14.700" cy="8.300" r="7.600" fill="#f5f5f4" stroke="#b5b5b5" stroke-width="1.500"/><rect x="12.500" y="13" width="11" height="10.500" fill="#b9b9b9" stroke="#a5a5a5" stroke-width=".600"/><path d="M15.500 15l5 3.300-5 3.300" fill="none" stroke="#fff" stroke-width="1.800"/></g>
<g transform="translate(599,63)"><path d="M4 1.500h17.500v19H6.500" fill="#e9e9e8" stroke="#9a9a9a" stroke-width="1"/><path d="M2.500 2.500q0-1.500 1.500-1.500t1.500 1.500v17.500q0 1.500 1.500 1.500H4q-1.500 0-1.500-1.500z" fill="#d6d6d5" stroke="#9a9a9a" stroke-width="1"/><rect x="13" y="13" width="10.500" height="10.500" rx="1.800" fill="#c9a510"/><g stroke="#fff" stroke-width="1.100" stroke-linecap="round"><path d="M18.25 14.05v8.400M14.05 18.25h8.400"/><path stroke-width=".900" d="M15.45 15.45l5.600 5.600M21.05 15.45l-5.600 5.600"/></g><circle cx="18.25" cy="18.25" r="2.100" fill="#fff"/><circle cx="18.25" cy="18.25" r=".800" fill="#c9a510"/></g>
<g transform="translate(632,63)"><path d="M4 1.500h17.500v19H6.500" fill="#e9e9e8" stroke="#9a9a9a" stroke-width="1"/><path d="M2.500 2.500q0-1.500 1.500-1.500t1.500 1.500v17.500q0 1.500 1.500 1.500H4q-1.500 0-1.500-1.500z" fill="#d6d6d5" stroke="#9a9a9a" stroke-width="1"/><path d="M12.500 .5h4.500v7.500l-2.250 2.800-2.250-2.800z" fill="#5b8ccb" stroke="#3467a8" stroke-width=".800"/><rect x="13" y="13" width="10.500" height="10.500" rx="1.800" fill="#c9a510"/><g stroke="#fff" stroke-width="1.100" stroke-linecap="round"><path d="M18.25 14.05v8.400M14.05 18.25h8.400"/><path stroke-width=".900" d="M15.45 15.45l5.600 5.600M21.05 15.45l-5.600 5.600"/></g><circle cx="18.25" cy="18.25" r="2.100" fill="#fff"/><circle cx="18.25" cy="18.25" r=".800" fill="#c9a510"/></g>
<g transform="translate(665,63)"><path d="M4 1.500h17.500v19H6.500" fill="#e9e9e8" stroke="#9a9a9a" stroke-width="1"/><path d="M2.500 2.500q0-1.500 1.500-1.500t1.500 1.500v17.500q0 1.500 1.500 1.500H4q-1.500 0-1.500-1.500z" fill="#d6d6d5" stroke="#9a9a9a" stroke-width="1"/><path d="M12.500 .5h4.500v7.500l-2.250 2.800-2.250-2.800z" fill="#5b8ccb" stroke="#3467a8" stroke-width=".800"/></g>
<g transform="translate(698,63)"><g fill="#3f7fd0" stroke="#2a62ae" stroke-width=".700" stroke-linejoin="round"><path d="M2 11.500C2 5 7 1.500 12 1.500c3 0 5.200 1 7 2.800l2.500-2.500v8.200h-8.200l2.700-2.700C14.800 6.200 13.500 5.700 12 5.700 8.500 5.700 6.300 8 6.300 11.500z"/><path d="M22.500 12.500c0 6.500-5 10-10 10-3 0-5.200-1-7-2.800L3 22.200V14h8.200l-2.700 2.700c1.200 1.100 2.500 1.600 4 1.600 3.500 0 5.700-2.300 5.700-5.800z"/></g></g>
<g transform="translate(747,63)"><circle cx="8.600" cy="7.600" r="8.300" fill="#5a8ccc" stroke="#4a78b8" stroke-width=".800"/><path d="M2.500 5.500a7 7 0 0 1 12-1.500a9 6 0 0 0-12 1.500z" fill="#8ab0e0" opacity=".7"/><text x="8.300" y="12.600" font-family="Liberation Serif" font-style="italic" font-weight="bold" font-size="14" text-anchor="middle" fill="#fff">i</text><path transform="translate(11.1,8.9) scale(1)" d="M0 0L3.700 11.800 6.200 8.900 10.500 13.200 13.200 10.500 8.900 6.200 11.800 3.700z" fill="#fff" stroke="#4a4a4a" stroke-width="0.9" stroke-linejoin="round"/></g>
<g transform="translate(780,63)"><g fill="#f2f2f1" stroke="#c2c2c2" stroke-width=".900"><circle cx="17.70" cy="8.85" r="2.200"/><circle cx="15.53" cy="14.08" r="2.200"/><circle cx="10.30" cy="16.25" r="2.200"/><circle cx="5.07" cy="14.08" r="2.200"/><circle cx="2.90" cy="8.85" r="2.200"/><circle cx="5.07" cy="3.62" r="2.200"/><circle cx="10.30" cy="1.45" r="2.200"/><circle cx="15.53" cy="3.62" r="2.200"/></g><circle cx="10.300" cy="8.850" r="7.500" fill="#f2f2f1"/><circle cx="10.300" cy="8.850" r="6.300" fill="#b4b4b4" stroke="#a2a2a2" stroke-width=".900"/><circle cx="10.300" cy="8.850" r="4.600" fill="#c4c4c4"/><path d="M8.500 6.200l5 2.650-5 2.650z" fill="#f6f6f6"/><path transform="translate(14,12.6) scale(0.8)" d="M0 0L3.700 11.800 6.200 8.900 10.500 13.200 13.200 10.500 8.900 6.200 11.800 3.700z" fill="#fafafa" stroke="#b0b0b0" stroke-width="1.125" stroke-linejoin="round"/></g>
<path d="M809 72.5h9l-4.5 5z" fill="#c2c0bc"/>
<g transform="translate(826,63)"><rect x=".700" y=".400" width="21.500" height="19" fill="#e6e6e4" stroke="#2a2a2a" stroke-width="1" stroke-dasharray="2 1.400"/><rect x="1.800" y="1.500" width="13.200" height="13.200" fill="#f8e24c" stroke="#d4b010" stroke-width=".900"/><path transform="translate(9.4,7.6) scale(1.05)" d="M0 0L3.700 11.800 6.200 8.900 10.500 13.200 13.200 10.500 8.900 6.200 11.800 3.700z" fill="#fff" stroke="#4a4a4a" stroke-width="0.8571428571428571" stroke-linejoin="round"/></g>
<path d="M854 72.5h9l-4.5 5z" fill="#2e2e2e"/>
<g transform="translate(870,63)"><path d="M2.500 2v19h17.500z" fill="#f5e04a" stroke="#c9aa10" stroke-width="1" stroke-linejoin="round"/><path d="M3.500 1.500h18v19z" fill="#e6e6e5" stroke="#9a9a9a" stroke-width="1" stroke-linejoin="round"/></g>
<path d="M899 72.5h9l-4.5 5z" fill="#2e2e2e"/>
<g transform="translate(916,63)"><rect x="1.500" y="1.500" width="13.500" height="13.500" fill="#f5e04a" stroke="#c9aa10" stroke-width="1"/><rect x="12.500" y="12.500" width="10.500" height="10.500" rx="2" fill="#dc2a2a" stroke="#a81818" stroke-width=".600"/><circle cx="17.750" cy="17.750" r="3.300" fill="none" stroke="#fff" stroke-width="1.300"/><path d="M15.500 20l4.500-4.500" stroke="#fff" stroke-width="1.300"/></g>
<g transform="translate(948,63)"><rect x="2" y="1.500" width="19.500" height="19.500" fill="#f2f6fc" stroke="#6a9ad8" stroke-width="1.100"/><path d="M4.500 4.600h5M12 4.600h7" stroke="#6a9ad8" stroke-width="1.800"/><path d="M2 7h19.500" stroke="#9abce8" stroke-width=".800"/><path d="M4.500 9.500h5M12 9.500h7M4.500 12.500h5M12 12.500h7M4.500 15.500h5M12 15.500h7M4.500 18.300h5M12 18.300h7" stroke="#6a9ad8" stroke-width="1.200"/></g>
<g transform="translate(981,63)"><path d="M2.500 1v21M21.500 1v21" stroke="#555" stroke-width="1.400"/><path d="M.5 22.500h23" stroke="#777" stroke-width="1.800"/><path d="M2.500 4.500h19M2.500 11h19M2.500 17.500h19" stroke="#555" stroke-width="1"/><g stroke-width=".800"><circle cx="8" cy="4.500" r="2.300" fill="#fff" stroke="#d33"/><circle cx="17" cy="4.500" r="2.300" fill="#fff" stroke="#d33"/><circle cx="7" cy="11" r="2.300" fill="#fff" stroke="#4a4"/><circle cx="12" cy="11" r="2.300" fill="#fff" stroke="#4a4"/><circle cx="7" cy="17.500" r="2.300" fill="#fff" stroke="#47b"/><circle cx="12" cy="17.500" r="2.300" fill="#fff" stroke="#47b"/><circle cx="17" cy="17.500" r="2.300" fill="#fff" stroke="#47b"/></g><circle cx="8" cy="4.500" r="1" fill="#e55"/><circle cx="17" cy="4.500" r="1" fill="#e55"/><circle cx="7" cy="11" r="1" fill="#7c7"/><circle cx="12" cy="11" r="1" fill="#7c7"/><circle cx="7" cy="17.500" r="1" fill="#7ad"/><circle cx="12" cy="17.500" r="1" fill="#7ad"/><circle cx="17" cy="17.500" r="1" fill="#7ad"/></g>
<g transform="translate(1014,63)"><path d="M4.500 1.500h14l.5 5.500h-1.200c-.5-2.500-1.500-3.300-4-3.300H9.500l5.800 7.800-6.300 8h5.500c2.800 0 4-.8 4.800-3.500h1.200l-1 6H4.500v-1.200l7-9.300-7-8.800z" fill="#a0109c"/></g>
<g transform="translate(1047,63)"><path d="M2 5h20M2.600 2.500v5M21.400 2.500v5" stroke="#2f5a8a" stroke-width="1.500"/><rect x="1.500" y="11.500" width="21" height="7.500" rx="1" fill="#c9c9c9" stroke="#666" stroke-width="1"/><path d="M5 12v3M8.500 12v4.500M12 12v3M15.500 12v4.500M19 12v3" stroke="#555" stroke-width="1"/></g>
<path d="M1076 72.5h9l-4.5 5z" fill="#2e2e2e"/>
<g transform="translate(1092,63)"><path d="M4 1.500h15.500q2.500 0 2.500 2.500v6q0 2.500-2.500 2.500H12l-5 5 .5-5H4q-2.500 0-2.500-2.500V4q0-2.500 2.500-2.500z" fill="#fbe670" stroke="#c9aa10" stroke-width="1" stroke-linejoin="round"/><circle cx="5.500" cy="18" r="3.800" fill="#6fa56f" stroke="#777" stroke-width="1"/></g>
<g transform="translate(1125,63)"><path d="M1.500 1.500h20.500v14.500H9.500L2 21.500l2.500-5.500h-3z" fill="#edf2f6" stroke="#9aa7b4" stroke-width="1" stroke-linejoin="round"/><text x="11.800" y="13.500" font-family="Liberation Serif" font-weight="bold" font-size="14" text-anchor="middle" fill="#444">T</text></g>
<path d="M1154 72.5h9l-4.5 5z" fill="#2e2e2e"/>
<g transform="translate(22,102)"><path d="M.400 7.600l11.500-3.600 3.600 12-11.500 3.800z" fill="#dc6e3c" stroke="#b85226" stroke-width=".700" stroke-linejoin="round"/><path d="M3.500 2.700l12.500-.700 1 13-12 .800z" fill="#f6d244" stroke="#c9a510" stroke-width=".700" stroke-linejoin="round"/><path d="M11.600 -1l12.300 3.700-1.800 11.700-14.200-1.800z" fill="#6a96cc" stroke="#3f6aa8" stroke-width=".800" stroke-linejoin="round"/><rect x="15" y="14.400" width="8.900" height="8.500" rx="1.600" fill="#5a9a62" stroke="#3a7a45" stroke-width=".500"/><path d="M19.450 16.200v5M17 18.700h4.900" stroke="#fff" stroke-width="1.700"/></g>
<g transform="translate(55,102)"><path d="M.200 6.400L12 1.500l11.700 4.300-10.700 6.800z" fill="#b8930a" stroke="#6a5806" stroke-width=".700" stroke-linejoin="round"/><circle cx="12.600" cy="6.400" r="7.400" fill="#86acde" stroke="#3f6aa8" stroke-width=".800"/><path d="M6.500 4.500l3.500-3 3 .800-1 3-3 1.500zM14 5.500l4.500-2 1.500 4-3 2.500zM8 9l3.500 .500-1 3z" fill="#34598f"/><path d="M.200 6.400l12.800 6.200v10.200L.200 16.300z" fill="#d8ad10" stroke="#5a4a04" stroke-width=".800" stroke-linejoin="round"/><path d="M13 12.600l10.700-6.800v9.700L13 22.800z" fill="#faf084" stroke="#5a4a04" stroke-width=".800" stroke-linejoin="round"/><rect x="15.1" y="14.4" width="8.7" height="8.7" rx="1.400" fill="#c9a510"/><path d="M19.45 15.85L19.45 21.65M21.96 17.30L16.94 20.20M21.96 20.20L16.94 17.30" stroke="#fff" stroke-width="1.150" stroke-linecap="round"/></g>
<g transform="translate(88,102)"><path d="M2.500 1.400L8.700 16.300 15.500 1.400h6.200" fill="none" stroke="#2f4458" stroke-width="1.200"/><g fill="#fff" stroke="#2f4458" stroke-width=".800"><path d="M2.500 -.700l2.100 2.100-2.100 2.100-2.100-2.100z"/><circle cx="8.700" cy="16.300" r="1.500"/><path d="M15.500 -.700l2.100 2.100-2.100 2.100-2.100-2.100z"/><path d="M21.700 -.700l2.100 2.100-2.100 2.100-2.100-2.100z"/></g><rect x="15.1" y="14.4" width="8.7" height="8.7" rx="1.400" fill="#c9a510"/><path d="M19.45 15.85L19.45 21.65M21.96 17.30L16.94 20.20M21.96 20.20L16.94 17.30" stroke="#fff" stroke-width="1.150" stroke-linecap="round"/></g>
<g transform="translate(121,102)"><path d="M.600 22.500C2 15 5 9.500 10 5 14 1.500 18.500 -.200 22.700 -.400 22.200 5 20 9.500 16 13c-3 2.600-7 4.300-11 5" fill="#9ab8de" stroke="#4a6a9a" stroke-width=".900" stroke-linejoin="round"/><path d="M.600 22.500C4.500 13.500 10 7 20.500 1.500" fill="none" stroke="#3a5a8a" stroke-width=".900"/><path d="M7 12l9-2.500M10 8.500l8-3M5 15.500l8-2" stroke="#e0ebf8" stroke-width=".700"/><rect x="15.3" y="14.4" width="8.7" height="8.7" rx="1.400" fill="#c9a510"/><path d="M19.65 15.85L19.65 21.65M22.16 17.30L17.14 20.20M22.16 20.20L17.14 17.30" stroke="#fff" stroke-width="1.150" stroke-linecap="round"/></g>
<g transform="translate(155,102)"><path d="M5.800 1.400v4M8.500 1.400v4M11.600 1.400v4M14.700 1.400v4M17.400 1.400v4M5.800 15.500v3.300M8.500 15.500v3.300M11.600 15.500v3.300" stroke="#2f4e7e" stroke-width="1"/><rect x="2.300" y="5.100" width="18.600" height="10.600" rx="1.500" fill="#6a96cc" stroke="#3a5f98" stroke-width="1"/><rect x="14.4" y="14.4" width="8.7" height="8.7" rx="1.400" fill="#c9a510"/><path d="M18.75 15.85L18.75 21.65M21.26 17.30L16.24 20.20M21.26 20.20L16.24 17.30" stroke="#fff" stroke-width="1.150" stroke-linecap="round"/></g>
<g transform="translate(205,102)"><g transform="translate(-3.5,0)"><path d="M14 1l4.500 2.200L9.500 19.500 5 17.300z" fill="#c8c8c8" stroke="#a8a8a8" stroke-width=".800" stroke-linejoin="round"/><path d="M15.500 1.700l2 1M13 3l4.500 2.200" stroke="#a8a8a8" stroke-width=".700"/><path d="M5 17.300l4.500 2.200-5 3.500z" fill="#dcdcdc" stroke="#a8a8a8" stroke-width=".700" stroke-linejoin="round"/><path d="M5.300 21.400l-.8 1.600 1.600-.9z" fill="#999"/><path d="M12 7l-5 10M14.200 8.200l-5 10" stroke="#a8a8a8" stroke-width=".500" opacity=".6"/></g><g transform="translate(2.5,0)"><path d="M14 1l4.500 2.200L9.500 19.500 5 17.300z" fill="#cfcfcf" stroke="#ababab" stroke-width=".800" stroke-linejoin="round"/><path d="M15.500 1.700l2 1M13 3l4.500 2.200" stroke="#ababab" stroke-width=".700"/><path d="M5 17.300l4.500 2.200-5 3.500z" fill="#e0e0e0" stroke="#ababab" stroke-width=".700" stroke-linejoin="round"/><path d="M5.300 21.400l-.8 1.600 1.600-.9z" fill="#999"/><path d="M12 7l-5 10M14.200 8.200l-5 10" stroke="#ababab" stroke-width=".500" opacity=".6"/></g><path d="M18 20.5h6l-3.0 3.5z" fill="#c0beba"/></g>
<g transform="translate(236,102)"><g transform="translate(1.5,0)"><path d="M14 1l4.500 2.200L9.500 19.500 5 17.300z" fill="#ecd92e" stroke="#6e6a30" stroke-width=".800" stroke-linejoin="round"/><path d="M15.500 1.700l2 1M13 3l4.500 2.200" stroke="#6e6a30" stroke-width=".700"/><path d="M5 17.300l4.500 2.200-5 3.500z" fill="#cfcfcf" stroke="#6e6a30" stroke-width=".700" stroke-linejoin="round"/><path d="M5.300 21.400l-.8 1.600 1.600-.9z" fill="#333"/><path d="M12 7l-5 10M14.200 8.200l-5 10" stroke="#6e6a30" stroke-width=".500" opacity=".6"/></g></g>
<g transform="translate(269,102)"><rect x="2" y="0.5" width="19.5" height="21" rx="2.5" fill="#c4c4c4" stroke="#ababab" stroke-width="1"/><rect x="5.2" y="1.5" width="13" height="9.5" fill="#e4e4e4" stroke="#ababab" stroke-width=".5"/><path d="M7 4h9.4M7 6.2h9.4M7 8.4h9.4" stroke="#b5b5b5" stroke-width="1"/><rect x="6" y="14" width="11.5" height="7" fill="#dedede" stroke="#ababab" stroke-width=".5"/><rect x="7.8" y="15.3" width="3" height="4.6" fill="#aaa"/><path d="M20.500 9l2.500 1.500-8 11-3 2 .500-3.500z" fill="#cdcdcd" stroke="#a5a5a5" stroke-width=".800" stroke-linejoin="round"/></g>
<g transform="translate(303,102)"><path d="M2.500 2.500L8.500 14 15 4h5.500" fill="none" stroke="#b5b5b5" stroke-width="1.300"/><g fill="#ececec" stroke="#b0b0b0" stroke-width=".900"><rect x="1" y="1" width="3.400" height="3.400"/><rect x="6.800" y="12.300" width="3.400" height="3.400"/><rect x="13.300" y="2.300" width="3.400" height="3.400"/><rect x="19.500" y="2.300" width="3.400" height="3.400"/></g><rect x="13" y="13" width="10.500" height="10.500" rx="1.800" fill="#bdbdbd"/><g stroke="#fff" stroke-width="1.100" stroke-linecap="round"><path d="M18.25 14.05v8.400M14.05 18.25h8.400"/><path stroke-width=".900" d="M15.45 15.45l5.600 5.600M21.05 15.45l-5.600 5.600"/></g><circle cx="18.25" cy="18.25" r="2.100" fill="#fff"/><circle cx="18.25" cy="18.25" r=".800" fill="#bdbdbd"/></g>
<g transform="translate(335,102)"><g stroke="#b0b0b0" fill="none"><circle cx="5.500" cy="4" r="3.300" fill="#d5d5d5" stroke-width="1"/><path d="M3.200 1.700l4.600 4.600M7.800 1.700L3.200 6.300" stroke-width=".900"/><path d="M9 3h9.500M9 5.500h11" stroke-width="1"/><path d="M5.500 7.500L1.500 20M8 7L5.500 20" stroke-width="1.200"/><path d="M12 11l9.500 10.500" stroke-width="3" stroke="#b8b8b8"/><path d="M21.500 8.500L11 21" stroke-width="2.600" stroke="#bdbdbd"/><path d="M18.500 7l5 4" stroke-width="3.200" stroke="#b0b0b0"/></g></g>
<path d="M364 111.5h9l-4.5 5z" fill="#c2c0bc"/>
<g transform="translate(380,102)"><g fill="#dcdcdc" stroke="#b8b8b8" stroke-width="1"><rect x="1.500" y="2.500" width="19" height="5"/><rect x="1.500" y="9.500" width="19" height="5"/><rect x="1.500" y="16.500" width="19" height="5"/></g><path d="M17.500 1l4 2-10 17-4.500 3 .500-5.500z" fill="#cfcfcf" stroke="#a8a8a8" stroke-width=".900" stroke-linejoin="round"/></g>
<g transform="translate(413,102)"><g stroke="#8c8c8c" fill="none"><path d="M4.500 5.500h15" stroke-width="2"/><path d="M9.500 4q0-2 2.500-2t2.500 2" stroke-width="1.400"/><path d="M6 7.500l1 14h10l1-14z" stroke-width="1.800" stroke-linejoin="round"/><path d="M10 9.500v10M14 9.500v10" stroke-width="1.600"/></g></g>
<g transform="translate(446,102)"><g fill="none" stroke="#a5a5a5"><path d="M1 5.500l15 6.500M1.500 12.500L17 8" stroke-width="1.400" stroke="#b5b5b5"/><ellipse cx="19.500" cy="6.500" rx="3" ry="2.300" transform="rotate(-25 19.500 6.500)" stroke-width="1.400"/><ellipse cx="19" cy="14.500" rx="2.300" ry="3" transform="rotate(-25 19 14.500)" stroke-width="1.400"/></g></g>
<g transform="translate(479,102)"><path d="M9 1h7l4 4v10h-11z" fill="#f1f1f1" stroke="#b0b0b0" stroke-width="1" stroke-linejoin="round"/><path d="M16 1v4h4" fill="#e8e8e8" stroke="#b0b0b0" stroke-width="1" stroke-linejoin="round"/><path d="M4.5 5h8l4 4v12.5h-12z" fill="#fafafa" stroke="#a8a8a8" stroke-width="1" stroke-linejoin="round"/><path d="M12.5 5v4h4" fill="#e8e8e8" stroke="#a8a8a8" stroke-width="1" stroke-linejoin="round"/><path d="M7 12.500h7M7 15h7M7 17.500h7" stroke="#bbb" stroke-width="1"/></g>
<g transform="translate(512,102)"><rect x="4" y="2.500" width="15.500" height="19.500" rx="1.500" fill="#e3e3e3" stroke="#a8a8a8" stroke-width="1.200"/><rect x="7.500" y="1" width="8.500" height="3.500" rx="1" fill="#d0d0d0" stroke="#a8a8a8" stroke-width=".900"/><path d="M6.5 6h7.0l3.5 3.5v10.5h-10.5z" fill="#fafafa" stroke="#b0b0b0" stroke-width="1" stroke-linejoin="round"/><path d="M13.5 6v3.5h3.5" fill="#e8e8e8" stroke="#b0b0b0" stroke-width="1" stroke-linejoin="round"/><path d="M8.500 12.500h6.500M8.500 15h6.500M8.500 17.500h6.500" stroke="#bbb" stroke-width="1"/></g>
<g transform="translate(545,102)"><path d="M1.500 9L10 2v4.500c6.500 0 10 3 10 7.500 0 3-2 5.500-6 6.500 1.500-1.200 2-2.500 2-3.800 0-2.500-2-3.700-6-3.700v4z" fill="#b9b9b9" stroke="#a5a5a5" stroke-width=".800" stroke-linejoin="round"/></g>
<g transform="translate(578,102)"><path d="M22.500 9L14 2v4.500c-6.500 0-10 3-10 7.500 0 3 2 5.500 6 6.500-1.500-1.200-2-2.500-2-3.800 0-2.500 2-3.700 6-3.700v4z" fill="#b9b9b9" stroke="#a5a5a5" stroke-width=".800" stroke-linejoin="round"/></g>
<g transform="translate(626,102)"><path d="M1.2 8.35l5 -5.35h15.7v10.7h-15.7z" fill="#f6dc3a" stroke="#c7a40c" stroke-width="1" stroke-linejoin="round"/><text x="13.55" y="11.399999999999999" font-family="Liberation Sans" font-weight="bold" font-size="8.3" text-anchor="middle" fill="#222">abc</text></g>
<g transform="translate(660,102)"><circle cx="8.700" cy="8.100" r="6.900" fill="#c41a1e" stroke="#6a0c0c" stroke-width=".700"/><path d="M8.700 8.100V15A6.900 6.900 0 0 1 3.200 4z" fill="#12a04a" stroke="#0a5a28" stroke-width=".500"/><path d="M8.700 8.100L3.200 4A6.900 6.900 0 0 1 13.800 3.500z" fill="#f6cc1a" stroke="#8a7208" stroke-width=".500"/><rect x="10" y="15.600" width="3.700" height="6" fill="#f6c21a" stroke="#9a7a08" stroke-width=".500"/><rect x="14.400" y="9.700" width="3.800" height="11.900" fill="#12a04a" stroke="#0a5a28" stroke-width=".500"/><rect x="18.700" y="16.300" width="3.200" height="5.300" fill="#c41a1e" stroke="#6a0c0c" stroke-width=".500"/></g>
<g transform="translate(693,102)"><rect x=".700" y="1.800" width="22.500" height="18.700" fill="#dfe9f8" stroke="#2a64d8" stroke-width="1.300"/><path d="M1 8.55l5 -5.15h14.7v10.3h-14.7z" fill="#f6dc3a" stroke="#c7a40c" stroke-width="1" stroke-linejoin="round"/><text x="12.85" y="11.400000000000002" font-family="Liberation Sans" font-weight="bold" font-size="8.3" text-anchor="middle" dx="-1.5" fill="#222">ab</text><rect x="16.400" y="7.200" width="2.800" height="7" rx="1.300" fill="#f4f4f4" stroke="#999" stroke-width=".600"/><circle cx="18.700" cy="16.900" r="4.600" fill="#b8202a" stroke="#7a1018" stroke-width=".500"/></g>
<g transform="translate(726,102)"><path d="M0.8 8.45l5 -5.25h15v10.5h-15z" fill="#f4f4f4" stroke="#bdbdbd" stroke-width="1" stroke-linejoin="round"/><text x="12.8" y="11.399999999999999" font-family="Liberation Sans" font-weight="bold" font-size="8.3" text-anchor="middle" dx="-1.5" fill="#9c9c9c">ab</text><rect x="16.400" y="7.200" width="2.800" height="7" rx="1.300" fill="#f4f4f4" stroke="#999" stroke-width=".600"/><circle cx="18.700" cy="16.900" r="4.600" fill="#9c9c9c" stroke="#8a8a8a" stroke-width=".500"/></g>
<g transform="translate(759,102)"><path d="M0.5 7.5l5 -5.0h14.5v10h-14.5z" fill="#f4f4f4" stroke="#bdbdbd" stroke-width="1" stroke-linejoin="round"/><text x="12.25" y="10.2" font-family="Liberation Sans" font-weight="bold" font-size="8" text-anchor="middle" fill="#9c9c9c">abc</text><path d="M8 18.500q7-6 14.500 0q-7.500 5-14.500 0z" fill="#f4f4f4" stroke="#9a9a9a" stroke-width=".900"/><circle cx="15.300" cy="18.300" r="2.400" fill="#9a9a9a"/><path d="M9 15.500q6-4 12.500-1" fill="none" stroke="#aaa" stroke-width=".800"/></g>
<g transform="translate(792,102)"><path d="M0.5 7.5l5 -5.0h14.5v10h-14.5z" fill="#f4f4f4" stroke="#bdbdbd" stroke-width="1" stroke-linejoin="round"/><text x="12.25" y="10.2" font-family="Liberation Sans" font-weight="bold" font-size="8" text-anchor="middle" fill="#9c9c9c">abc</text><rect x="13" y="12.500" width="10.500" height="10.500" rx="1.800" fill="#9c9c9c" stroke="#8a8a8a" stroke-width=".600"/><path d="M14.800 16.500h4v-2.300l3.700 3.500-3.700 3.500v-2.300h-4z" fill="#fff"/></g>
<g transform="translate(825,102)"><path d="M0.5 7.5l5 -5.0h14.5v10h-14.5z" fill="#f4f4f4" stroke="#bdbdbd" stroke-width="1" stroke-linejoin="round"/><text x="12.25" y="10.2" font-family="Liberation Sans" font-weight="bold" font-size="8" text-anchor="middle" fill="#9c9c9c">abc</text><rect x="13" y="12.500" width="10.500" height="10.500" rx="1.800" fill="#9c9c9c" stroke="#8a8a8a" stroke-width=".600"/><path d="M15.500 19.500a3.300 3.300 0 1 0 .300-3.500" fill="none" stroke="#fff" stroke-width="1.500"/><path d="M14.300 14.500l.500 3.200 3-1z" fill="#fff"/></g>
<g transform="translate(858,102)"><path d="M0.5 7.5l5 -5.0h14.5v10h-14.5z" fill="#f4f4f4" stroke="#bdbdbd" stroke-width="1" stroke-linejoin="round"/><text x="12.25" y="10.2" font-family="Liberation Sans" font-weight="bold" font-size="8" text-anchor="middle" fill="#9c9c9c">abc</text><rect x="13" y="12.500" width="10.500" height="10.500" rx="1.800" fill="#c9c9c9" stroke="#bdbdbd" stroke-width=".600"/><path d="M15.500 21l5.500-6" stroke="#fff" stroke-width="2.200" stroke-linecap="round"/></g>
<g transform="translate(907,102)"><circle cx="12" cy="10.500" r="11" fill="#4f80c4" stroke="#2a4f8c" stroke-width="1"/><g fill="none" stroke="#cfe0f4" stroke-width=".800"><ellipse cx="12" cy="10.500" rx="5.500" ry="11"/><path d="M1 10.500h22M3 5h18M3 16h18M12 -.5v22"/></g><path d="M6 4l4 1 1 3-3 2-3-2zM14 6l4-1 2 4-3 3-3-2z" fill="#2a4f8c" opacity=".7"/><g fill="#111"><path d="M8.500 13.500l-4.500 6.500h6.500l1.500-6.500zM17.500 13.500l4.500 6.500h-6.500l-1.500-6.500z"/><rect x="11" y="14.500" width="4" height="3.500"/><ellipse cx="8" cy="20.500" rx="4.300" ry="3"/><ellipse cx="19.500" cy="20.500" rx="4.300" ry="3"/></g><ellipse cx="8" cy="20.700" rx="2.500" ry="1.600" fill="#fff"/><ellipse cx="19.500" cy="20.700" rx="2.500" ry="1.600" fill="#fff"/></g>
<g transform="translate(957,102)"><path d="M10 .800c-3.500 0-4.300 1.300-4.300 3v2.500h5v1H3.500C1.500 7.300.500 9 .500 11.500s1 4.300 3 4.300h2v-2.800c0-2 1.500-3.200 3.500-3.200h4.500c1.700 0 2.800-1.200 2.800-2.800V3.800c0-1.700-1.500-3-4-3z" fill="#3f7bbd"/><circle cx="7.800" cy="3.300" r=".900" fill="#fff"/><path d="M12.200 22.200c3.500 0 4.300-1.300 4.300-3v-2.500h-5v-1h7.200c2 0 3-1.700 3-4.200s-1-4.300-3-4.300h-2V10c0 2-1.500 3.200-3.500 3.200H8.700c-1.700 0-2.800 1.200-2.800 2.800v3.200c0 1.700 1.500 3 4 3z" fill="#f7cf3e"/><circle cx="14.400" cy="19.700" r=".900" fill="#fff"/><path d="M17 17.500l5.500 2.300-5.500 2.300" fill="none" stroke="#222" stroke-width="1.200"/></g>
<g transform="translate(1005,102)"><rect x="1.500" y="1" width="19.500" height="21.500" rx="1" fill="#6a96cc" stroke="#2a3c55" stroke-width="1"/><rect x="1.500" y="1" width="5" height="21.500" fill="#2f4058"/><text x="13.500" y="17" font-size="14" text-anchor="middle" fill="#fff">?</text></g>
<g transform="translate(1071,102)"><path d="M2 2l5-1 4 1.500 5-2 5.500 1.500-.500 6 1.500 5-1 8-6-1-5 2-5-1.500-5 .500 1-6-1.500-6z" fill="#b5dba5" opacity=".85"/><path d="M9 8c2-2 5-2 6 1s-3 4-2 7" fill="none" stroke="#9ab8d8" stroke-width="2" opacity=".9"/><path d="M4 6l4 2M15 4l3 4M5 15l5-2" stroke="#8cc47a" stroke-width="1.200"/><path d="M13 21L22.500 13.500" stroke="#3a8a1a" stroke-width="2"/><path d="M13.500 15.500l7 6M20 14l-6 8" stroke="#c8b41a" stroke-width="1.300"/><circle cx="17" cy="18.500" r="3.300" fill="none" stroke="#c8b41a" stroke-width="1.200"/></g>
<g transform="translate(1104,102)"><path d="M1 3l6-1.500 5 2 5-2 5 2v18l-5-2-5 2-5-2-6 2z" fill="#f3e7a0"/><path d="M1 3l6-1.500v6L1 9z" fill="#3fae4a"/><path d="M4 10h7v6H4z" fill="#e9b8b8"/><path d="M8 17c4-1 6 2 6 5l-7-1zM12 14l10 8h-6z" fill="#4f80d4"/><path d="M17 4l5 1.500V14l-6-2z" fill="#f6d87a"/><path d="M3 14h8v5H3z" fill="none" stroke="#6a96cc" stroke-width="1"/><path d="M20.500 1L14 13" stroke="#6a3a1a" stroke-width="3.300" stroke-linecap="round"/><path d="M14 13l-2.500 5 4-3.500z" fill="#d8a070"/></g>
</svg>
<span class="t" style="left:9.5px;top:133px;font-size:15px;letter-spacing:-0.36px;">Layers</span>
<svg style="left:173px;top:136px" width="28" height="13" viewBox="0 0 28 13"><g fill="none" stroke="#4a4a48" stroke-width="1"><rect x="1.5" y="1.5" width="10" height="10" rx="2"/><rect x="3.5" y="5" width="4" height="4" /><rect x="5.5" y="3.3" width="4" height="4" fill="#efebe7"/><rect x="15.5" y="1.5" width="10" height="10" rx="2"/></g><path d="M18 4l5 5M23 4l-5 5" stroke="#333" stroke-width="1.8"/></svg>
<div style="left:9px;top:156px;width:24px;height:23px;background:#dcd8d3;border:1px solid #b4b0aa;border-radius:3px;"></div>
<span class="t" style="left:187.5px;top:156.5px;font-size:15.5px;">&#187;</span>
<div style="left:5px;top:183px;width:196px;height:418.5px;background:#fff;border:1px solid #b7b3ad;"></div>
<div style="left:68px;top:222px;width:131.5px;height:19px;background:#e5f0fa;border:1px solid #a9c9e6;border-radius:2px;"></div>
<div class="cb" style="left:29px;top:186px;width:13.5px;height:13.5px;"></div>
<div style="left:54px;top:190px;width:6px;height:6px;background:#e8101c;border-radius:50%;"></div>
<span class="t" style="left:72px;top:183.8px;font-size:14.5px;letter-spacing:-0.33px;font-weight:bold;font-style:italic;color:#a3a3a3;">places</span>
<div class="cb" style="left:29px;top:205px;width:13.5px;height:13.5px;"></div>
<div style="left:49px;top:211.5px;width:16px;height:1.2px;background:#c8444a;"></div>
<span class="t" style="left:72px;top:202.8px;font-size:14.5px;letter-spacing:-0.18px;font-weight:bold;font-style:italic;color:#a3a3a3;">roads</span>
<div class="cb" style="left:29px;top:224px;width:13.5px;height:13.5px;"><svg style="left:0;top:0" width="11" height="11" viewBox="0 0 11 11"><path d="M2.2 5.6l2.3 3 4.2-6.8" fill="none" stroke="#111" stroke-width="1.9"/></svg></div>
<div style="left:49px;top:230.5px;width:16px;height:1.2px;background:#2a50d2;"></div>
<span class="t" style="left:71.6px;top:221.8px;font-size:14.5px;letter-spacing:0.03px;font-weight:bold;text-decoration:underline;">rivers</span>
<div class="cb" style="left:29px;top:243px;width:13.5px;height:13.5px;"></div>
<div style="left:49px;top:242px;width:16px;height:16px;background:#beb297;border:1px solid #9a8f78;"></div>
<span class="t" style="left:72px;top:240.8px;font-size:14.5px;letter-spacing:-0.19px;font-weight:bold;font-style:italic;color:#a3a3a3;">buildings</span>
<div class="cb" style="left:29px;top:262px;width:13.5px;height:13.5px;"><svg style="left:0;top:0" width="11" height="11" viewBox="0 0 11 11"><path d="M2.2 5.6l2.3 3 4.2-6.8" fill="none" stroke="#111" stroke-width="1.9"/></svg></div>
<div style="left:49px;top:261px;width:16px;height:16px;background:#a5dbfb;border:1px solid #4a6af2;"></div>
<span class="t" style="left:71.6px;top:259.8px;font-size:14.5px;letter-spacing:0.44px;font-weight:bold;">water</span>
<div class="cb" style="left:29px;top:281px;width:13.5px;height:13.5px;"></div>
<div style="left:49px;top:280px;width:16px;height:16px;background:#f3d03e;border:1px solid #d4b22e;"></div>
<span class="t" style="left:72px;top:278.8px;font-size:14.5px;letter-spacing:0.05px;font-weight:bold;font-style:italic;color:#a3a3a3;">protected_areas</span>
<div class="cb" style="left:29px;top:300px;width:13.5px;height:13.5px;"><svg style="left:0;top:0" width="11" height="11" viewBox="0 0 11 11"><path d="M2.2 5.6l2.3 3 4.2-6.8" fill="none" stroke="#111" stroke-width="1.9"/></svg></div>
<div style="left:49px;top:299px;width:16px;height:16px;background:#bcbebd;border:1px solid #bcbebd;"></div>
<span class="t" style="left:71.6px;top:297.8px;font-size:14.5px;letter-spacing:-0.01px;font-weight:bold;">landuse</span>
<div style="left:5px;top:603px;width:196px;height:1px;background:#c5c1bb;"></div>
<div style="left:73.5px;top:603px;width:80px;height:25px;background:linear-gradient(#dedad5,#d9d5d0);border:1px solid #c0bcb6;border-top:none;border-radius:0 0 4px 4px;"></div>
<div style="left:5px;top:603px;width:69px;height:27px;background:#f6f4f1;border:1px solid #c0bcb6;border-top:none;border-radius:0 0 4px 4px;"></div>
<span class="t" style="left:17.5px;top:607px;font-size:15px;letter-spacing:-0.42px;">Layers</span>
<span class="t" style="left:85.6px;top:605.5px;font-size:15px;letter-spacing:0.13px;">Browser</span>
<div style="left:207px;top:133px;width:717px;height:498px;border:1px solid #b4b0aa;background:#fff;"></div>
<svg style="position:absolute;left:208px;top:134px" width="715" height="496" viewBox="208 134 715 496">
<rect x="208" y="134" width="715" height="496" fill="#fff"/>
<g fill="#bcbebd">
<polygon points="207.5,134.0 207.5,143.2 277.2,157.0 306.0,175.5 379.0,168.2 436.5,169.0 458.2,177.0 462.0,215.8 476.5,215.8 479.0,209.0 515.2,202.5 537.8,212.0 535.0,214.5 555.5,213.2 560.0,200.8 590.0,200.8 592.5,205.8 600.0,201.5 615.0,201.5 617.5,205.8 622.5,201.5 630.0,207.0 633.8,201.5 647.5,201.5 756.2,202.5 768.0,201.5 756.2,188.2 686.2,141.5 701.2,134.0"/>
<polygon points="472.7,227.3 477.1,218.4 483.8,218.1 497.3,223.6 508.4,231.0 506.5,226.6 512.2,219.1 533.0,218.1 535.3,227.3 537.5,240.7 534.5,249.7 530.0,255.6 531.5,266.0 524.1,273.5 522.6,278.0 516.6,277.2 514.4,261.6 509.9,245.9 504.7,252.6 488.3,248.2 489.8,243.7 486.8,241.5 482.4,247.4 474.9,242.2 472.7,234.7"/>
<polygon points="462.2,265.3 466.0,262.3 467.5,265.7"/>
<polygon points="549.4,227.3 569.5,202.7 588.2,204.9 591.9,202.0 603.1,203.5 603.8,207.2 609.0,212.4 621.0,210.2 631.4,213.9 634.4,207.2 638.8,210.9 647.0,205.7 646.3,210.9 631.4,218.4 610.5,214.6 606.1,224.3 609.0,233.3 616.5,236.2 636.6,238.5 633.6,245.2 632.1,242.2 615.0,246.7 603.1,245.9 591.9,243.7 596.4,228.0 591.1,237.0 584.4,231.0 583.0,219.8 579.2,216.9 568.8,225.8 574.8,230.3 579.2,227.3 585.2,242.2 579.2,249.7 573.3,246.7 565.8,251.9 552.4,252.6 555.4,258.6 543.5,259.3 543.2,251.9 545.7,246.7 544.2,240.7 549.4,232.5 547.2,230.3"/>
<polygon points="540.5,234.0 545.7,234.0 542.7,242.2 539.7,252.6 542.0,260.1 549.4,269.0 567.0,288.8 555.0,300.0 544.5,292.5 525.0,310.0 542.0,326.2 531.2,337.5 500.0,346.2 491.5,349.8 456.5,368.5 437.8,381.0 416.5,406.0 410.2,415.5 397.0,410.5 404.5,399.2 419.5,382.8 414.0,385.5 406.5,381.0 384.5,409.0 379.0,413.0 372.0,414.0 367.8,412.2 367.8,408.5 401.5,367.2 401.5,356.0 405.2,353.5 401.5,341.0 406.5,334.8 400.2,327.2 407.8,319.8 460.0,291.4 486.8,283.9 494.3,275.0 512.2,277.2 515.9,283.6 535.6,269.3 533.3,265.7 531.8,255.9 536.0,249.9 539.0,241.0"/>
<polygon points="550.0,311.2 552.5,310.8 553.0,322.5 549.5,322.5"/>
<polygon points="446.5,382.2 482.8,371.0 497.8,370.2 507.8,376.0 514.0,391.0 510.2,398.5 495.2,401.0 486.5,397.2 481.5,403.5 479.0,416.0 486.5,431.0 490.2,429.8 492.8,433.5 489.0,439.8 475.2,446.0 476.5,453.5 454.0,459.8 450.2,453.5 441.5,457.2 436.0,453.5 454.0,426.0 444.0,417.2 446.5,413.5 440.2,406.0 442.8,388.5"/>
<polygon points="510.2,413.5 522.0,415.5 521.0,421.5 509.0,419.8"/>
<polygon points="356.0,309.0 359.5,309.0 359.5,312.2 356.0,312.2"/>
<polygon points="385.2,445.2 396.0,450.5 390.2,463.8 389.0,471.5 382.8,482.0 372.0,477.8 376.5,464.0"/>
<polygon points="207.5,489.0 216.5,485.2 213.5,501.5 216.5,511.5 224.0,519.0 241.5,523.5 226.5,536.0 216.5,537.8 207.5,536.5"/>
<polygon points="500.0,371.2 507.5,377.5 514.2,391.2 511.2,400.0 505.0,401.2 500.0,400.0"/>
<polygon points="510.5,413.2 522.5,415.0 521.5,421.2 509.5,419.5"/>
<polygon points="791.7,252.6 798.0,241.2 801.8,237.4 804.3,240.7 818.3,239.9 836.0,243.7 843.6,250.1 868.9,258.9 871.5,261.5 884.1,256.4 891.7,257.7 894.3,264.0 915.8,270.3 923.7,275.4 923.7,283.0 914.5,289.3 912.0,294.4 915.1,302.0 909.5,312.1 908.2,319.7 896.8,327.3 895.5,312.1 893.0,315.9 886.7,314.7 884.1,307.1 868.9,299.5 856.3,291.9 848.7,280.5 846.1,279.7 841.1,267.8 836.0,266.5 834.7,275.4 825.4,274.6 828.4,267.8 820.8,274.1 811.9,275.4 809.4,279.2 791.7,267.8 789.1,261.5"/>
<polygon points="824.6,277.9 828.9,282.2 832.2,287.6 823.3,288.1"/>
<polygon points="823.3,288.1 846.1,289.3 855.0,302.0 857.5,314.7 862.6,323.5 846.1,326.1 843.6,351.4 820.8,347.1 822.1,334.9 818.8,327.3 819.5,309.6 820.8,299.5"/>
<polygon points="790.4,313.4 808.1,310.1 818.8,310.1 818.8,327.3 822.1,337.5 814.5,345.1 800.5,350.1 792.9,345.1 795.5,340.0 790.4,332.4 785.3,324.8 791.7,321.0"/>
<polygon points="776.5,328.6 782.8,327.8 786.6,337.5 784.1,342.5 777.7,334.9"/>
<polygon points="750.0,327.5 752.5,325.0 775.0,331.2 785.0,337.5 792.5,350.0 782.5,351.2 775.0,347.5 750.0,331.2"/>
<polygon points="814.5,346.3 819.5,347.6 815.7,357.7 820.8,362.8 842.3,362.8 842.3,364.8 825.9,366.6 817.0,365.3 809.4,360.3 808.1,355.2"/>
<polygon points="865.1,332.9 870.2,333.7 858.8,352.7 847.4,366.6 844.9,364.1 857.5,345.1"/>
<polygon points="923.7,319.7 908.2,329.9 898.1,337.5 896.8,347.6 900.6,378.0 898.2,380.0 901.5,388.8 900.0,393.8 900.8,402.5 925.0,399.8 923.7,378.0"/>
<polygon points="894.3,332.4 898.1,331.1 895.5,337.5"/>
<polygon points="923.7,276.7 912.0,288.1 923.7,286.8"/>
<polygon points="923.7,296.9 920.1,302.0 920.9,310.9 923.7,310.9"/>
<ellipse cx="849.5" cy="505" rx="11.3" ry="9.5"/>
</g>
<g fill="none" stroke="#fff" stroke-width="0.8">
<polyline points="790.4,258.9 810.7,262.7 825.9,258.9 843.6,266.5 866.4,276.7 868.9,260.2"/>
<polyline points="810.7,262.7 819.5,272.9"/>
<polyline points="866.4,276.7 881.6,284.3 894.3,299.5 893.0,314.7"/>
<polyline points="843.6,271.6 865.1,283.0 867.7,275.4 886.7,283.0 901.9,282.2 912.0,286.8"/>
<polyline points="884.1,277.9 891.7,267.8 906.9,270.3 908.2,275.4 918.3,279.2"/>
<polyline points="894.3,299.5 905.7,293.1 912.0,288.1"/>
<polyline points="899.3,365.9 922.1,364.3"/>
<polyline points="808.1,310.9 816.2,323.5 818.8,334.9 810.7,347.6"/>
<polyline points="791.7,326.1 805.6,326.1 816.2,323.5"/>
<polyline points="790.4,329.9 798.0,337.5 800.5,348.9"/>
<polyline points="816.2,332.4 822.1,337.5"/>
</g>
<ellipse cx="810.2" cy="249.3" rx="5" ry="4.6" fill="#fff"/>
<g fill="#a6dafc" stroke="#2a4cf6" stroke-width="1.15" stroke-linejoin="round">
<polygon points="430.2,229.5 424.0,232.0 415.2,248.2 428.2,251.2 427.2,242.0 430.2,234.5"/>
<polygon points="432.0,224.5 442.2,218.8 437.0,228.2"/>
<polygon points="417.8,252.0 412.8,257.0 417.8,264.0 419.5,257.0"/>
<polygon points="391.0,196.5 396.0,199.0 397.0,202.0 394.0,200.8"/>
<polygon points="393.2,203.2 397.0,204.0 396.0,206.2 393.5,205.8"/>
<polygon points="686.8,234.5 690.0,239.0 691.2,245.8 688.8,247.0 686.2,244.0"/>
<polygon points="825.4,274.6 833.5,276.2 846.1,279.7 842.3,286.3 832.2,287.6 828.9,281.7"/>
<polygon points="785.3,324.8 791.7,331.1 785.8,333.2"/>
<polygon points="791.7,346.3 795.0,352.2 794.2,357.7 785.3,353.4 789.9,351.4"/>
<polygon points="833.5,383.6 841.1,384.3 846.9,386.1 843.6,388.1 837.3,386.9"/>
<polygon points="869.0,393.2 874.5,395.5 879.5,393.8 881.0,396.5 874.5,398.2 870.8,396.5"/>
<polygon points="612.5,319.2 616.2,329.5 610.8,330.0 610.2,326.2"/>
<polygon points="705.5,337.5 718.8,331.2 722.0,336.2 712.5,340.5"/>
<polygon points="603.1,260.1 606.8,258.6 608.6,261.6 605.3,262.3"/>
<polygon points="603.0,260.0 608.0,260.5 608.0,262.5 604.5,262.0"/>
<polygon points="921.1,375.5 923.7,375.5 923.7,381.8 921.1,381.1"/>
<polygon points="843.8,433.8 845.8,432.8 847.2,435.5 845.5,437.2"/>
<ellipse cx="810.2" cy="249.3" rx="3.2" ry="3.0"/>
<ellipse cx="877.3" cy="271.9" rx="2" ry="1.8"/>
<ellipse cx="784.8" cy="314.4" rx="2.6" ry="2.2"/>
<ellipse cx="549.3" cy="272.8" rx="2.2" ry="2.7"/>
<ellipse cx="603.3" cy="250.5" rx="1.2" ry="1.2"/>
<ellipse cx="442" cy="287.8" rx="1.2" ry="1.2"/>
<ellipse cx="456.2" cy="278.8" rx="0.6" ry="0.6"/>
<ellipse cx="722" cy="317" rx="0.8" ry="1"/>
<ellipse cx="848.8" cy="415.2" rx="1.4" ry="1"/>
<ellipse cx="869" cy="421.3" rx="1" ry="1"/>
<ellipse cx="885.8" cy="428" rx="1.2" ry="1.2"/>
</g>
<g fill="none" stroke="#2a50d2" stroke-width="1.55" stroke-linejoin="round" stroke-linecap="round">
<path d="M360.5 197.8C359.8 199.3 357.1 203.0 356.5 207.0C355.9 211.0 357.6 217.0 357.2 222.0C356.8 227.0 355.6 232.4 354.0 237.0C352.4 241.6 348.8 246.2 347.8 249.5C346.8 252.8 348.8 253.7 348.2 257.0C347.6 260.3 344.5 265.5 344.0 269.5C343.5 273.5 344.4 278.5 345.2 280.8C346.0 283.1 348.6 282.2 349.0 283.2C349.4 284.2 347.1 284.9 347.8 287.0C348.5 289.1 352.2 294.3 353.2 295.8C354.1 297.3 353.5 295.1 353.5 296.0C353.5 296.9 354.4 298.5 353.2 301.0C352.0 303.5 347.8 307.9 346.5 311.0C345.2 314.1 346.1 317.9 345.2 319.8C344.3 321.7 342.0 319.1 341.0 322.2C340.0 325.3 340.8 332.9 339.0 338.5C337.2 344.1 331.2 348.5 330.2 356.0C329.2 363.5 331.3 378.1 332.8 383.5C334.3 388.9 337.1 384.8 339.0 388.5C340.9 392.2 342.8 401.8 344.0 406.0C345.2 410.2 346.1 412.2 346.5 413.5"/>
<path d="M207.5 309.0C210.7 309.5 220.8 310.5 226.5 312.2C232.2 313.9 236.1 317.3 241.5 319.0C246.9 320.7 251.5 321.3 259.0 322.2C266.5 323.1 279.8 322.9 286.5 324.2C293.2 325.5 295.9 327.8 299.0 329.8C302.1 331.8 303.9 333.9 305.2 336.0C306.4 338.1 306.6 340.3 306.5 342.2C306.4 344.1 303.7 344.7 304.5 347.2C305.3 349.7 309.5 353.6 311.5 357.2C313.5 360.8 315.4 364.1 316.5 368.5C317.6 372.9 316.5 378.9 318.2 383.5C319.9 388.1 323.4 391.6 326.5 396.0C329.6 400.4 333.2 406.9 336.5 409.8C339.8 412.7 344.6 411.2 346.5 413.5C348.4 415.8 347.0 421.0 347.8 423.5C348.6 426.0 349.4 427.8 351.5 428.5C353.6 429.2 357.7 426.6 360.2 427.8C362.7 429.1 366.1 433.8 366.5 436.0C366.9 438.2 362.6 438.5 362.8 441.0C363.0 443.5 367.0 448.5 367.8 451.0C368.6 453.5 368.4 453.9 367.8 456.0C367.2 458.1 364.6 462.5 364.0 463.8C363.4 465.1 364.4 462.7 364.0 464.0C363.6 465.3 362.8 469.6 361.5 471.5C360.2 473.4 358.4 473.9 356.5 475.2C354.6 476.4 351.4 477.3 350.2 479.0C348.9 480.7 349.9 483.1 349.0 485.2C348.1 487.3 345.3 489.0 344.8 491.5C344.3 494.0 346.4 497.9 345.8 500.2C345.2 502.5 342.8 503.6 341.0 505.2C339.2 506.8 335.6 506.7 334.8 509.8C334.0 512.9 335.8 519.6 336.0 524.0C336.2 528.4 337.4 533.5 336.0 536.0C334.6 538.5 330.2 537.2 327.8 539.0C325.4 540.8 323.5 543.6 321.5 546.5C319.5 549.4 316.8 554.8 315.8 556.5"/>
<path d="M534.5 216.2C535.0 217.4 537.2 220.4 537.8 223.2C538.4 226.0 538.6 230.1 538.2 233.2C537.8 236.3 535.5 239.9 535.2 242.0C534.9 244.1 537.5 243.7 536.5 245.8C535.5 247.9 530.0 251.8 529.0 254.5C528.0 257.2 530.4 259.7 530.2 262.0C530.0 264.3 528.8 266.1 527.8 268.2C526.8 270.3 524.8 272.2 524.0 274.5C523.2 276.8 524.5 279.7 522.8 282.0C521.1 284.3 515.9 286.7 514.0 288.2C512.1 289.7 512.5 289.5 511.5 290.8C510.5 292.1 511.1 292.8 507.8 296.0C504.5 299.2 494.2 306.9 491.5 309.8C488.8 312.7 494.0 310.4 491.5 313.5C489.0 316.6 481.5 323.1 476.5 328.5C471.5 333.9 467.8 339.1 461.5 346.0C455.2 352.9 444.2 365.6 439.0 369.8C433.8 374.0 431.9 370.0 430.2 371.0C428.5 372.0 430.9 374.1 429.0 376.0C427.1 377.9 423.6 378.0 419.0 382.2C414.4 386.4 404.8 397.2 401.5 401.0C398.2 404.8 401.1 403.7 399.0 404.8C396.9 405.9 390.9 405.9 389.0 407.8C387.1 409.7 388.4 413.8 387.8 416.0C387.2 418.2 385.8 418.5 385.2 421.0C384.6 423.5 384.6 429.1 384.0 431.0C383.4 432.9 382.1 430.7 381.5 432.2C380.9 433.7 382.5 436.7 380.2 439.8C377.9 442.9 369.9 449.1 367.8 451.0"/>
<path d="M470.8 229.5C471.1 231.2 471.4 236.4 472.8 239.5C474.2 242.6 475.9 244.4 479.0 248.2C482.1 251.9 487.3 257.2 491.5 262.0C495.7 266.8 500.7 272.3 504.0 277.0C507.3 281.7 510.2 287.8 511.5 290.0"/>
<path d="M207.5 580.2C211.1 581.5 223.3 585.7 229.0 587.8C234.7 589.9 235.5 590.6 241.5 592.8C247.5 595.0 260.0 599.8 265.2 600.8C270.4 601.8 270.8 600.1 272.8 599.0C274.8 597.9 276.3 597.3 277.2 594.0C278.1 590.7 278.9 583.4 278.2 579.0C277.5 574.6 274.2 572.4 272.8 567.8C271.4 563.2 269.5 554.8 269.5 551.5C269.5 548.2 269.4 548.6 272.8 547.8C276.2 547.0 284.6 545.9 290.2 546.5C295.8 547.1 302.2 549.8 306.5 551.5C310.8 553.2 313.1 554.4 315.8 556.5C318.5 558.6 321.1 560.7 322.8 564.0C324.5 567.3 325.7 572.3 326.0 576.5C326.3 580.7 326.2 584.8 324.8 589.0C323.4 593.2 319.8 596.9 317.8 601.5C315.8 606.1 313.6 612.8 312.8 616.5C312.0 620.2 312.5 621.8 312.8 624.0C313.1 626.2 314.5 628.6 314.8 629.5"/>
<path d="M378.2 629.5C382.5 626.4 399.1 615.5 404.0 611.0C408.9 606.5 407.0 606.9 407.8 602.8C408.6 598.7 407.6 591.8 409.0 586.5C410.4 581.2 414.1 573.7 416.5 570.8C418.9 567.9 420.4 566.8 423.5 569.0C426.6 571.2 432.4 581.2 435.2 584.0C438.0 586.8 436.6 585.9 440.2 585.8C443.8 585.7 451.3 583.7 456.5 583.5C461.7 583.3 464.4 583.2 471.5 584.5C478.6 585.8 492.9 589.7 499.0 591.5C505.1 593.3 505.5 593.8 507.8 595.2C510.1 596.7 512.1 598.2 512.8 600.2C513.5 602.2 516.0 603.2 512.0 607.0C508.0 610.8 493.2 619.0 489.0 622.8C484.8 626.5 486.9 628.4 486.5 629.5"/>
</g>
</svg>
<svg style="left:204px;top:375px" width="2" height="17" viewBox="0 0 2 17" shape-rendering="crispEdges"><rect x="0" y="0" width="1" height="1" fill="#b4b0ab"/><rect x="1" y="1" width="1" height="1" fill="#fbfaf8"/><rect x="0" y="3" width="1" height="1" fill="#b4b0ab"/><rect x="1" y="4" width="1" height="1" fill="#fbfaf8"/><rect x="0" y="6" width="1" height="1" fill="#b4b0ab"/><rect x="1" y="7" width="1" height="1" fill="#fbfaf8"/><rect x="0" y="9" width="1" height="1" fill="#b4b0ab"/><rect x="1" y="10" width="1" height="1" fill="#fbfaf8"/><rect x="0" y="12" width="1" height="1" fill="#b4b0ab"/><rect x="1" y="13" width="1" height="1" fill="#fbfaf8"/><rect x="0" y="15" width="1" height="1" fill="#b4b0ab"/><rect x="1" y="16" width="1" height="1" fill="#fbfaf8"/></svg>
<svg style="left:927px;top:375px" width="2" height="17" viewBox="0 0 2 17" shape-rendering="crispEdges"><rect x="0" y="0" width="1" height="1" fill="#b4b0ab"/><rect x="1" y="1" width="1" height="1" fill="#fbfaf8"/><rect x="0" y="3" width="1" height="1" fill="#b4b0ab"/><rect x="1" y="4" width="1" height="1" fill="#fbfaf8"/><rect x="0" y="6" width="1" height="1" fill="#b4b0ab"/><rect x="1" y="7" width="1" height="1" fill="#fbfaf8"/><rect x="0" y="9" width="1" height="1" fill="#b4b0ab"/><rect x="1" y="10" width="1" height="1" fill="#fbfaf8"/><rect x="0" y="12" width="1" height="1" fill="#b4b0ab"/><rect x="1" y="13" width="1" height="1" fill="#fbfaf8"/><rect x="0" y="15" width="1" height="1" fill="#b4b0ab"/><rect x="1" y="16" width="1" height="1" fill="#fbfaf8"/></svg>
<span class="t" style="left:934.2px;top:133px;font-size:15px;letter-spacing:-0.06px;">Layer Styling</span>
<svg style="left:1337px;top:137px" width="28" height="12" viewBox="0 0 28 12"><g fill="none" stroke="#4a4a48" stroke-width="1"><rect x="1.5" y="1.5" width="10" height="9" rx="2"/><rect x="3.5" y="4.5" width="4" height="4" /><rect x="5.5" y="3" width="4" height="4" fill="#efebe7"/><rect x="15.5" y="1.5" width="10" height="9" rx="2"/></g><path d="M18.3 3.7l4.5 4.5M22.8 3.7l-4.5 4.5" stroke="#333" stroke-width="1.7"/></svg>
<div class="cmb" style="left:933px;top:155px;width:429.5px;height:24.5px;"></div>
<span class="t" style="left:959px;top:158px;font-size:15px;letter-spacing:-0.06px;">rivers</span>
<svg style="left:938px;top:160px" width="18" height="16" viewBox="0 0 18 16"><path d="M1.5 2.5L7.5 14 12 2.5 15.5 2.5" fill="none" stroke="#777" stroke-width="1"/><circle cx="1.8" cy="2.5" r="1.2" fill="#fff" stroke="#777" stroke-width=".7"/><circle cx="15.5" cy="2.5" r="1.2" fill="#fff" stroke="#777" stroke-width=".7"/></svg>
<svg style="left:1347.5px;top:166px" width="8" height="4.5" viewBox="0 0 8 4.5"><path d="M0 0h8l-4.0 4.5z" fill="#3c3c3c"/></svg>
<div class="cmb" style="left:974px;top:186px;width:388.5px;height:24.5px;"></div>
<span class="t" style="left:999.3px;top:188.5px;font-size:15px;letter-spacing:-0.04px;">Single symbol</span>
<svg style="left:982px;top:191px" width="14" height="16" viewBox="0 0 14 16"><g fill="#16a84e" stroke="#0b6b2d" stroke-width=".9"><rect x="0.5" y="1" width="10" height="3" rx=".5"/><rect x="2.5" y="6.300" width="10" height="3" rx=".5"/><rect x="0.5" y="11.600" width="11.500" height="3" rx=".5"/></g></svg>
<svg style="left:1347.5px;top:197px" width="8" height="4.5" viewBox="0 0 8 4.5"><path d="M0 0h8l-4.0 4.5z" fill="#3c3c3c"/></svg>
<div style="left:933px;top:218px;width:38px;height:409.5px;background:#5e5e5e;"></div>
<div style="left:974px;top:217px;width:256px;height:119px;background:#fff;border:1px solid #b7b3ad;"></div>
<div style="left:975px;top:218px;width:254px;height:18.7px;background:#308cc6;"></div>
<svg style="left:980.5px;top:225.3px" width="9" height="4.7" viewBox="0 0 9 4.7"><path d="M0 0h9l-4.5 4.7z" fill="#1a1a1a"/></svg>
<div style="left:997.5px;top:226.7px;width:16.5px;height:1.2px;background:#2a50d2;"></div>
<span class="t" style="left:1020.4px;top:217.5px;font-size:14.5px;letter-spacing:-0.10px;font-weight:bold;color:#fff;">Line</span>
<div style="left:1019px;top:246px;width:15px;height:1.2px;background:#2a50d2;"></div>
<span class="t" style="left:1040px;top:236.5px;font-size:15px;letter-spacing:0.02px;">Simple line</span>
<div style="left:1249px;top:275.7px;width:100px;height:1.3px;background:#2a50d2;"></div>
<div class="btn" style="left:974px;top:342px;width:28px;height:23.5px;"></div>
<div class="btn" style="left:1008px;top:342px;width:28px;height:23.5px;"></div>
<div class="btn" style="left:1042px;top:342px;width:28px;height:23.5px;"></div>
<div class="btn" style="left:1076px;top:342px;width:28px;height:23.5px;"></div>
<div class="btn" style="left:1110px;top:342px;width:28px;height:23.5px;"></div>
<div class="btn" style="left:1144px;top:342px;width:28px;height:23.5px;"></div>
<div style="left:974px;top:372px;width:388.5px;height:1px;background:#bdb9b3;"></div>
<span class="t" style="left:974.7px;top:383.5px;font-size:15px;letter-spacing:0.28px;">Unit</span>
<div class="cmb" style="left:1028px;top:381px;width:311px;height:24.5px;"></div>
<span class="t" style="left:1033.8px;top:383.5px;font-size:15px;letter-spacing:0.45px;">Millimeter</span>
<svg style="left:1324.5px;top:392px" width="8" height="4.5" viewBox="0 0 8 4.5"><path d="M0 0h8l-4.0 4.5z" fill="#3c3c3c"/></svg>
<span class="t" style="left:974.7px;top:408.5px;font-size:15px;letter-spacing:0.02px;">Opacity</span>
<div style="left:1029px;top:416px;width:200px;height:6px;background:#3e9bdb;border:1px solid #2a78b4;border-radius:3px;"></div>
<div style="left:1221px;top:412px;width:13.5px;height:13px;background:#fbfaf9;border:1px solid #aaa6a0;border-radius:3px;"></div>
<div class="inp" style="left:1239px;top:407px;width:100px;height:22.5px;"></div>
<div style="left:1323.5px;top:408px;width:14.5px;height:20.5px;background:linear-gradient(#f6f4f2,#e9e6e2);border-left:1px solid #c9c5bf;border-radius:0 2px 2px 0;"></div>
<span class="t" style="left:1245.3px;top:408.5px;font-size:15px;letter-spacing:-0.49px;">100.0 %</span>
<span class="t" style="left:974.7px;top:435.5px;font-size:15px;letter-spacing:0.01px;">Color</span>
<div class="btn" style="left:1028px;top:431px;width:298.5px;height:27.5px;"></div>
<div style="left:1033px;top:437px;width:289px;height:16px;background:#2b51d2;border-radius:2px;"></div>
<div class="btn" style="left:1327px;top:431px;width:12px;height:27.5px;"></div>
<svg style="left:1328.7px;top:442.3px" width="8.6" height="5" viewBox="0 0 8.6 5"><path d="M0 0h8.6l-4.3 5z" fill="#222"/></svg>
<span class="t" style="left:974.7px;top:480.5px;font-size:15px;letter-spacing:0.23px;">Width</span>
<div class="inp" style="left:1022px;top:478px;width:281px;height:23.5px;"></div>
<div style="left:1288px;top:479px;width:14px;height:21.5px;background:linear-gradient(#f6f4f2,#e9e6e2);border-left:1px solid #c9c5bf;border-radius:0 2px 2px 0;"></div>
<span class="t" style="left:1027.3px;top:480.5px;font-size:15px;letter-spacing:-0.09px;">0.36000</span>
<svg style="left:1327px;top:410.5px" width="8" height="16" viewBox="0 0 8 16"><path d="M0 5.5h8l-4-4.5z" fill="#b4b0aa"/><path d="M0 10.5h8l-4 4.5z" fill="#3c3c3c"/></svg>
<svg style="left:1291.5px;top:482px" width="8" height="16" viewBox="0 0 8 16"><path d="M0 5.5h8l-4-4.5z" fill="#3c3c3c"/><path d="M0 10.5h8l-4 4.5z" fill="#3c3c3c"/></svg>
<svg style="left:1311px;top:481px" width="27" height="19" viewBox="1311 481 27 19"><path d="M1312.5 489.5l5.500-6.500v13z" fill="#9a9a9a"/><rect x="1318" y="482.500" width="11" height="15" fill="#fff" stroke="#6a6a6a" stroke-width="1"/><path d="M1320 486h7" stroke="#444" stroke-width="1.800"/><path d="M1320 493h7" stroke="#666" stroke-width="1"/><path d="M1327.700 493.300h8.800l-4.400 4.800z" fill="#222"/></svg>
<div style="left:1348.5px;top:381px;width:14px;height:186px;background:#dedad6;border-left:1px solid #c9c5c0;"></div>
<div style="left:1348.5px;top:381px;width:14px;height:13px;background:#efebe7;"></div>
<div style="left:1348.5px;top:394px;width:14px;height:101px;background:linear-gradient(90deg,#f8f6f4,#e9e6e2);border:1px solid #c9c5c0;border-right:none;"></div>
<div style="left:1348.5px;top:553px;width:14px;height:14px;background:#efebe7;border-top:1px solid #c9c5c0;border-left:1px solid #c9c5c0;"></div>
<svg style="transform:scaleY(-1);left:1351px;top:384.5px" width="9" height="5" viewBox="0 0 9 5"><path d="M0 0h9l-4.5 5z" fill="#3c3c3c"/></svg>
<svg style="left:1351.5px;top:558px" width="8.5" height="4.6" viewBox="0 0 8.5 4.6"><path d="M0 0h8.5l-4.25 4.6z" fill="#3c3c3c"/></svg>
<div style="left:974px;top:526px;width:365px;height:1px;background:#bdb9b3;"></div>
<div class="inp" style="left:974px;top:533px;width:334.5px;height:24.5px;"></div>
<div style="left:1288.5px;top:534px;width:19px;height:22.5px;background:linear-gradient(#f6f4f2,#e9e6e2);border-left:1px solid #c9c5bf;border-radius:0 2px 2px 0;"></div>
<svg style="left:1294px;top:544px" width="8" height="4.5" viewBox="0 0 8 4.5"><path d="M0 0h8l-4.0 4.5z" fill="#3c3c3c"/></svg>
<span class="t" style="left:1004.4px;top:535.5px;font-size:15px;letter-spacing:-0.07px;">Favorites</span>
<svg style="left:984px;top:538px" width="14" height="14" viewBox="0 0 14 14"><circle cx="5.5" cy="5.5" r="3.8" fill="none" stroke="#8d8d8d" stroke-width="1.2"/><path d="M8.3 8.3l4 4" stroke="#8d8d8d" stroke-width="1.5"/></svg>
<svg style="left:1266px;top:540px" width="14" height="11" viewBox="0 0 14 11"><path d="M0.5 5.5L4.5 1h8.5v9H4.5z" fill="#8e8e8e"/><path d="M6.5 3.5l4 4M10.5 3.5l-4 4" stroke="#fff" stroke-width="1.3"/></svg>
<div style="left:974px;top:562px;width:350.5px;height:5px;background:#fff;border:1px solid #b9b5af;border-bottom:none;border-radius:3px 3px 0 0;"></div>
<div style="left:1326px;top:562px;width:13px;height:5px;background:#f6f4f2;border:1px solid #c4c0ba;border-bottom:none;border-radius:3px 3px 0 0;"></div>
<svg style="left:978.5px;top:583.5px" width="9" height="12" viewBox="0 0 9 12"><path d="M0.5 0.5v11l7.5-5.5z" fill="#1a1a1a"/></svg>
<span class="t" style="left:996.9px;top:579px;font-size:14.5px;letter-spacing:0.07px;font-weight:bold;">Layer Rendering</span>
<div class="btn" style="left:974px;top:604px;width:23.5px;height:23px;"></div>
<div class="btn" style="left:1004px;top:604px;width:24px;height:23px;"></div>
<div class="cb" style="left:1171px;top:609px;width:13.5px;height:13.5px;"><svg style="left:0;top:0" width="11" height="11" viewBox="0 0 11 11"><path d="M2.2 5.6l2.3 3 4.2-6.8" fill="none" stroke="#111" stroke-width="1.9"/></svg></div>
<span class="t" style="left:1190.7px;top:606px;font-size:15px;letter-spacing:-0.02px;">Live update</span>
<div class="btn" style="left:1282px;top:603px;width:80px;height:24.5px;"></div>
<span class="t" style="left:1310.6px;top:606px;font-size:15px;letter-spacing:0.15px;">Apply</span>
<svg style="left:1291px;top:606px" width="19" height="18" viewBox="0 0 19 18"><path d="M1.5 10.5l3-2.2 2.6 3.6L14.5 1.2l2.3 1.4L7.8 16.6 6 16.3z" fill="#97c93c" stroke="#5a8a1a" stroke-width=".9" stroke-linejoin="round"/></svg>
<div class="inp" style="left:9px;top:634px;width:273px;height:24.5px;"></div>
<span class="t" style="left:38.5px;top:636.5px;font-size:14.5px;letter-spacing:0.26px;color:#8b8985;">Type to locate (Ctrl+K)</span>
<svg style="left:18px;top:640px" width="13" height="14" viewBox="0 0 13 14"><circle cx="5" cy="5" r="3.7" fill="none" stroke="#8d8d8d" stroke-width="1.3"/><path d="M7.8 7.8l3.8 4.4" stroke="#8d8d8d" stroke-width="1.6"/></svg>
<span class="t" style="left:485.4px;top:636.8px;font-size:12.4px;letter-spacing:-0.12px;">Coordinate</span>
<div class="inp" style="left:549px;top:635px;width:103.5px;height:22.5px;"></div>
<span class="t" style="left:553.7px;top:636.8px;font-size:12.4px;letter-spacing:-0.32px;">20.3963,-34.0335</span>
<span class="t" style="left:686.6px;top:636.8px;font-size:12.4px;letter-spacing:-0.84px;">Scale</span>
<div class="inp" style="left:718px;top:634px;width:97px;height:24.5px;"></div>
<div style="left:794px;top:635px;width:20px;height:22.5px;background:linear-gradient(#f6f4f2,#e9e6e2);border-left:1px solid #c9c5bf;border-radius:0 2px 2px 0;"></div>
<svg style="left:800px;top:644px" width="8" height="4.5" viewBox="0 0 8 4.5"><path d="M0 0h8l-4.0 4.5z" fill="#3c3c3c"/></svg>
<span class="t" style="left:722.8px;top:636.8px;font-size:12.4px;letter-spacing:-0.33px;">1:51337</span>
<span class="t" style="left:848.3px;top:636.8px;font-size:12.4px;letter-spacing:0.04px;">Magnifier</span>
<div class="inp" style="left:904px;top:635px;width:98px;height:23.5px;"></div>
<div style="left:987px;top:636px;width:14px;height:21.5px;background:linear-gradient(#f6f4f2,#e9e6e2);border-left:1px solid #c9c5bf;border-radius:0 2px 2px 0;"></div>
<svg style="left:990px;top:638.5px" width="8" height="16" viewBox="0 0 8 16"><path d="M0 5.5h8l-4-4.5z" fill="#3c3c3c"/><path d="M0 10.5h8l-4 4.5z" fill="#3c3c3c"/></svg>
<span class="t" style="left:910px;top:636.8px;font-size:12.4px;letter-spacing:-0.63px;">100%</span>
<span class="t" style="left:1011.6px;top:636.8px;font-size:12.4px;letter-spacing:0.07px;">Rotation</span>
<div class="inp" style="left:1068px;top:635px;width:93.5px;height:23.5px;"></div>
<div style="left:1146.5px;top:636px;width:14px;height:21.5px;background:linear-gradient(#f6f4f2,#e9e6e2);border-left:1px solid #c9c5bf;border-radius:0 2px 2px 0;"></div>
<svg style="left:1149.5px;top:638.5px" width="8" height="16" viewBox="0 0 8 16"><path d="M0 5.5h8l-4-4.5z" fill="#3c3c3c"/><path d="M0 10.5h8l-4 4.5z" fill="#3c3c3c"/></svg>
<span class="t" style="left:1073px;top:636.8px;font-size:12.4px;letter-spacing:-0.72px;">0.0 &#176;</span>
<div class="cb" style="left:1168px;top:640px;width:13.5px;height:13px;"><svg style="left:0;top:0" width="11" height="11" viewBox="0 0 11 11"><path d="M2.2 5.6l2.3 3 4.2-6.8" fill="none" stroke="#111" stroke-width="1.9"/></svg></div>
<span class="t" style="left:1187.4px;top:636.8px;font-size:12.4px;letter-spacing:-0.39px;">Render</span>
<span class="t" style="left:1264.9px;top:636.8px;font-size:12.4px;letter-spacing:-0.93px;">EPSG:4326</span>
<svg style="left:0;top:133px" width="1374" height="530" viewBox="0 133 1374 530" font-family="Liberation Sans">
<g transform="translate(12.5,160.5)"><g transform="scale(0.800)"><path d="M5.400 1.900L16.800 7.500 14.800 10.600 3.700 4.600z" fill="#f0d23a"/><path d="M3.700 4.600L14.800 10.600 12.800 13.800 2 7.300z" fill="#5b8fd0"/><path d="M2 7.300L12.800 13.800 10.800 17 0.300 10z" fill="#d8485a"/><path d="M21.300 1L15.500 8.500" stroke="#b08a52" stroke-width="2.600" stroke-linecap="round"/><path d="M8.500 10.500l6.500-4 4 6-6.500 5z" fill="#d8c08a" stroke="#9a7a48" stroke-width=".700" stroke-linejoin="round"/></g></g>
<g transform="translate(39.5,158.5)"><g transform="scale(0.88)"><path d="M1.500 8.500v10.500h9" fill="none" stroke="#888" stroke-width="1"/><rect x="3.500" y="5.500" width="10" height="11" fill="#f4f4f4" stroke="#666" stroke-width="1"/><path d="M6.500 5.500v-3h4.500v3" fill="none" stroke="#666" stroke-width="1"/><path d="M8.700 2.500v11" stroke="#3f6fae" stroke-width="1.500"/><rect x="8.500" y="12.500" width="7" height="7" rx="1.500" fill="#5aa85a" stroke="#3a7a3a" stroke-width=".600"/><path d="M12 14v4M10 16h4" stroke="#fff" stroke-width="1.300"/></g></g>
<g transform="translate(63.5,160.5)"><g transform="scale(0.92)"><path d="M1 8q8-8 16 0q-8 7-16 0z" fill="#f4f4f4" stroke="#888" stroke-width="1"/><circle cx="9" cy="7.800" r="3.500" fill="#4f86c8" stroke="#2f5590" stroke-width=".600"/><circle cx="8.200" cy="7" r="1.100" fill="#111"/><path d="M2 4.500q6-5 13-1" fill="none" stroke="#999" stroke-width=".900"/><path d="M12 14.500h6l-3 3.500z" fill="#222"/></g></g>
<g transform="translate(89,158.5)"><g transform="scale(0.86)"><path d="M1 3.500h14l-5.200 7v8l-3.600-2v-6z" fill="#4f86c8" stroke="#2f5f9c" stroke-width=".800" stroke-linejoin="round"/><rect x=".800" y="1" width="14.400" height="2.600" rx="1" fill="#f2d23a" stroke="#c9a510" stroke-width=".600"/></g></g>
<g transform="translate(114,157)"><text x="0" y="12.500" font-family="Liberation Serif" font-size="19" fill="#9a9a9a">&#949;</text><path d="M7.500 12h7l-1.200 7h-1.500l-.800-4-1 4H8.500z" fill="#e4e4e4" stroke="#b8b8b8" stroke-width=".800"/></g>
<path d="M134 166h9l-4.5 5z" fill="#c2c0bc"/>
<g transform="translate(151,157)"><path d="M1.900 4v11.600M.300 4.200h13.500M1.900 8.400h2M1.900 14.200h2" stroke="#8a8a8a" stroke-width=".900" fill="none"/><path d="M6.800 2.500h5.200v8.300h2.800l-5.300 5.800-4.600-5z" fill="#4f86c8" stroke="#2f5f9c" stroke-width=".700" stroke-linejoin="round"/><rect x="3.600" y="6.900" width="3" height="3" fill="#fff" stroke="#f2a01a" stroke-width="1.100"/><rect x="3.600" y="12.700" width="3" height="3" fill="#fff" stroke="#f2a01a" stroke-width="1.100"/></g>
<g transform="translate(939.5,193)"><path d="M5.400 1.900L16.800 7.500 14.800 10.600 3.700 4.600z" fill="#a8cc4a"/><path d="M3.700 4.600L14.800 10.600 12.800 13.800 2 7.300z" fill="#5b8fd0"/><path d="M2 7.300L12.800 13.800 10.800 17 0.300 10z" fill="#d8485a"/><path d="M21.300 1L15.500 8.500" stroke="#b09a62" stroke-width="2.600" stroke-linecap="round"/><path d="M8.500 10.500l6.500-4 4 6-6.500 5z" fill="#bcb498" stroke="#8a8468" stroke-width=".700" stroke-linejoin="round"/></g>
<g transform="translate(938,228)"><path d="M.500 6.500L4.500 1h16v11h-16z" fill="#f6dc3a" stroke="#c7a40c" stroke-width="1" stroke-linejoin="round"/><text x="12" y="9.800" font-size="8" font-weight="bold" text-anchor="middle" fill="#333">abc</text></g>
<g transform="translate(938,254)"><path d="M10.500 .800L20 7 10.500 13 1 7z" fill="#f07272" stroke="#a81c1c" stroke-width="1" stroke-linejoin="round"/><path d="M1 7l9.500 6v10L1 17z" fill="#3fae3a" stroke="#1a6a1a" stroke-width=".800" stroke-linejoin="round"/><path d="M20 7l-9.500 6v10L20 17z" fill="#f2e23a" stroke="#9a8a0a" stroke-width=".800" stroke-linejoin="round"/></g>
<g transform="translate(937,285)"><path d="M8 7v8M14 7v8M5 20v-5h12.500v5M11 12v5" fill="none" stroke="#e8a21a" stroke-width="1.800"/><rect x="6" y=".500" width="10" height="7" fill="#ee6a6a" stroke="#c03a3a" stroke-width=".600"/><rect x=".500" y="15.500" width="9" height="7.500" fill="#f2d84a" stroke="#c9a510" stroke-width=".600"/><rect x="12.500" y="15.500" width="9" height="7.500" fill="#8fc0ee" stroke="#4f86c8" stroke-width=".600"/></g>
<g transform="translate(939,319)"><path d="M1 6.500L8 1v3.500c5 0 7 2.500 7 6h-3.500c0-2-1-2.700-3.500-2.700V12z" fill="#5fae6a" stroke="#3a7a45" stroke-width=".600" stroke-linejoin="round" transform="translate(16,0) scale(-1,1)"/><path d="M4.500 15.500l7-5.500v3.500c5 0 7 2.500 7 6.500 0 1-.300 2-.800 2.500.200-3-1.500-5-6.200-5v3.500z" fill="#f28a3a" stroke="#b85a1a" stroke-width=".600" stroke-linejoin="round"/></g>
<g transform="translate(974.5,342.5)"><path d="M11.500 5.500h4.500v4h4v4.500h-4v4h-4.500v-4h-4V9.500h4z" fill="#e8f4e8" stroke="#2f7a2f" stroke-width="1.300" stroke-linejoin="round"/><path d="M13.750 7v9.500M9 11.750h9.500" stroke="#4fa84f" stroke-width="1.500"/></g>
<g transform="translate(1008.5,342.5)"><rect x="8" y="9.500" width="11.500" height="4.500" rx="1" fill="#e4e4e4" stroke="#aaa" stroke-width="1"/></g>
<g transform="translate(1042.5,342.5)"><rect x="7.500" y="11" width="12" height="8" rx="1.500" fill="#dcdcdc" stroke="#b0b0b0" stroke-width="1"/><path d="M11 11V8q0-3 3.500-3t3.500 3" fill="none" stroke="#b8b8b8" stroke-width="1.500"/></g>
<g transform="translate(1076.5,342.5)"><rect x="7" y="5.500" width="13" height="13" rx="1" fill="#e6e6e6" stroke="#a0a0a0" stroke-width="1.200"/><path d="M13.500 18.500v-5.500h6.500" fill="none" stroke="#a0a0a0" stroke-width="1"/></g>
<g transform="translate(1110.5,342.5)"><path d="M6.500 16.500h14.500L13.750 5.500z" fill="#a8a8a8" stroke="#909090" stroke-width=".800"/></g>
<g transform="translate(1144.5,342.5)"><path d="M6.500 6.500h14.500L13.750 17.500z" fill="#a8a8a8" stroke="#909090" stroke-width=".800"/></g>
<g transform="translate(1318,538)"><circle cx="4" cy="3.500" r="2.900" fill="#d8582a"/><rect x="1" y="8.500" width="5.800" height="5.800" fill="#6fa56f"/><path d="M9 6l4.500-4.500" stroke="#3f6fae" stroke-width="1.700" stroke-linecap="round"/><text x="12" y="14.600" font-size="9.500" text-anchor="middle" fill="#444">a</text></g>
<g transform="translate(974,604.5)"><path d="M5.500 10l6-5v3.200c5 0 6.800 2.500 6.800 5.500 0 1.800-.800 3.200-2.500 4.200.500-.800.700-1.500.700-2.300 0-1.800-1.500-2.800-5-2.800v3.200z" fill="#f2813a" stroke="#c45a1a" stroke-width=".600" stroke-linejoin="round"/></g>
<g transform="translate(1004.5,604.5)"><path d="M18 10.500l-5.500-4.500v2.800c-4.500 0-6.200 2.300-6.200 5 0 1.600.700 2.900 2.300 3.800-.500-.700-.600-1.400-.600-2.100 0-1.600 1.300-2.500 4.500-2.500v2.800z" fill="#5fae6a" stroke="#3a7a45" stroke-width=".600" stroke-linejoin="round"/></g>
<g transform="translate(656,637.5)"><path d="M1.500 2.500l13 14.500" stroke="#444" stroke-width="1"/><rect x="3" y="1.500" width="8.500" height="12.500" rx="4" transform="rotate(-30 7.250 7.750)" fill="#4e4e4e" stroke="#2a2a2a" stroke-width=".800"/><path d="M3.500 5.500q2-3 5.500-3.500l1 3.800-4.300 2.500z" fill="#e8e8e8" stroke="#2a2a2a" stroke-width=".600"/><path d="M6.300 3.200l1.300 3.200" stroke="#2a2a2a" stroke-width=".700"/><circle cx="11.300" cy="12.800" r="2.300" fill="#efefef" stroke="#3a3a3a" stroke-width=".900"/><circle cx="11.300" cy="12.800" r=".700" fill="#444"/><path d="M12.500 4l3-2.800M14 6.500l2.500-.800" stroke="#555" stroke-width=".800"/></g>
<g transform="translate(826,639)"><path d="M3.500 7.500V5q0-3.500 3.500-3.500T10.500 5v2.500" fill="none" stroke="#a0a0a0" stroke-width="1.900"/><rect x="1" y="6.800" width="12" height="8.700" rx="1.500" fill="#6e6e6e"/><path d="M1.500 8h11" stroke="#8e8e8e" stroke-width=".800"/></g>
<g transform="translate(1244,640)"><g fill="none" stroke="#555" stroke-width=".900"><ellipse cx="7.500" cy="7" rx="7" ry="6.300"/><ellipse cx="7.500" cy="7" rx="3" ry="6.300"/><path d="M.500 7h14M1.500 3.800h12M1.500 10.200h12M7.500 .700v12.600"/></g></g>
<g transform="translate(1342,640)"><path d="M8 .500C3.700 .500 .500 3.100 .500 6.300s3.200 5.800 7.500 5.800c.700 0 1.300-.100 2-.200L13.500 14.500l-.800-3.600C14.400 9.700 15.500 8.100 15.500 6.300 15.500 3.100 12.300 .500 8 .500z" fill="#5a5a5a"/><circle cx="4.700" cy="6.300" r="1.100" fill="#fff"/><circle cx="8" cy="6.300" r="1.100" fill="#fff"/><circle cx="11.300" cy="6.300" r="1.100" fill="#fff"/></g>
</svg>
</body></html>
